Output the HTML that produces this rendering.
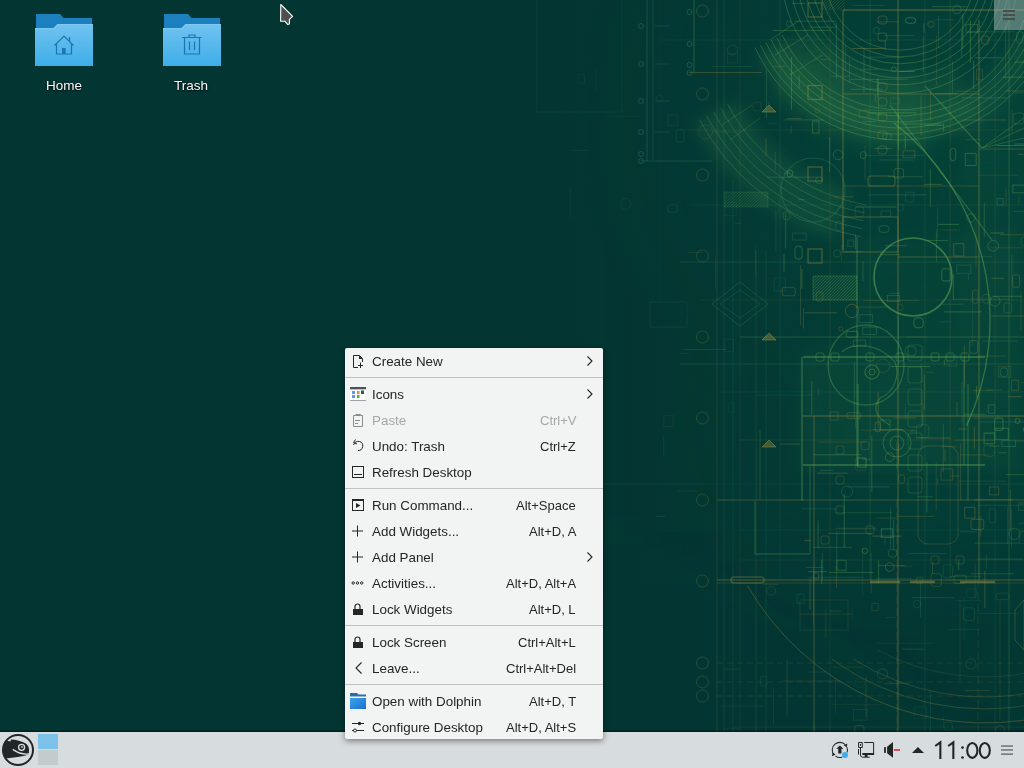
<!DOCTYPE html>
<html><head><meta charset="utf-8">
<style>
*{margin:0;padding:0;box-sizing:border-box}
html,body{width:1024px;height:768px;overflow:hidden;background:#033633;font-family:"Liberation Sans",sans-serif}
svg{display:block}
.abs{position:absolute}
#bg{position:absolute;left:0;top:0;width:1024px;height:768px}
.lbl{will-change:transform;position:absolute;top:78px;width:80px;text-align:center;color:#fcfcfc;font-size:13.5px;text-shadow:0 1px 2px rgba(0,0,0,.9),0 0 1px rgba(0,0,0,.6)}
#menu{position:absolute;z-index:5;left:345px;top:348px;width:258px;height:391px;background:#f2f4f3;border-radius:2px;box-shadow:0 2px 6px rgba(0,0,0,.45)}
.it{position:absolute;left:0;width:258px;height:26px;font-size:13px;color:#232627}
.it .t,.it .s{will-change:transform}
.it .t{position:absolute;left:27px;top:6px;white-space:nowrap;font-size:13.4px}
.it .s{position:absolute;right:27px;top:6px;white-space:nowrap}
.it svg{position:absolute;left:5px;top:5px}
.it .ar{position:absolute;left:241px;top:7px}
.it.dis{color:#a5a7a8}
.sep{position:absolute;left:0;width:258px;height:1px;background:#bfc1c2}
#panel{position:absolute;left:0;top:732px;width:1024px;height:36px;background:#d7dcdf}
</style></head><body>
<svg id="bg" width="1024" height="768" viewBox="0 0 1024 768">
<defs>
<radialGradient id="glow" cx="900" cy="120" r="330" gradientUnits="userSpaceOnUse">
<stop offset="0" stop-color="#2a8a50" stop-opacity="0.10"/>
<stop offset="0.5" stop-color="#1a6e48" stop-opacity="0.06"/>
<stop offset="1" stop-color="#0a4a3a" stop-opacity="0"/>
</radialGradient>
<radialGradient id="glow2" cx="900" cy="420" r="230" gradientUnits="userSpaceOnUse">
<stop offset="0" stop-color="#1f7548" stop-opacity="0.10"/>
<stop offset="1" stop-color="#0a4a3a" stop-opacity="0"/>
</radialGradient>
<linearGradient id="lg" x1="480" y1="0" x2="1024" y2="0" gradientUnits="userSpaceOnUse">
<stop offset="0" stop-color="#0a4a3a" stop-opacity="0"/>
<stop offset="0.45" stop-color="#0a4a3a" stop-opacity="0.05"/>
<stop offset="1" stop-color="#0b4e3c" stop-opacity="0.25"/>
</linearGradient>
<linearGradient id="vg" x1="0" y1="0" x2="0" y2="768" gradientUnits="userSpaceOnUse">
<stop offset="0" stop-color="#000" stop-opacity="1"/>
<stop offset="0.7" stop-color="#000" stop-opacity="1"/>
<stop offset="0.8" stop-color="#000" stop-opacity="0"/>
</linearGradient>
<linearGradient id="vgm" x1="0" y1="0" x2="0" y2="768" gradientUnits="userSpaceOnUse">
<stop offset="0" stop-color="#fff"/><stop offset="0.66" stop-color="#fff"/><stop offset="0.82" stop-color="#fff" stop-opacity="0.2"/><stop offset="1" stop-color="#fff" stop-opacity="0.1"/>
</linearGradient>
<mask id="vm" maskUnits="userSpaceOnUse" x="0" y="0" width="1024" height="768"><rect x="0" y="0" width="1024" height="768" fill="url(#vgm)"/></mask>
<filter id="softbig" x="0" y="0" width="1024" height="768" filterUnits="userSpaceOnUse"><feGaussianBlur stdDeviation="7"/></filter>
<filter id="soft" x="0" y="0" width="1024" height="768" filterUnits="userSpaceOnUse"><feGaussianBlur stdDeviation="0.45"/></filter>
</defs>
<g filter="url(#softbig)"><path d="M1045.0 47.6 A160 160 0 0 1 758.7 55.1 L785.2 41.0 A130 130 0 0 0 1017.8 34.9 Z" fill="#66b85a" fill-opacity="0.13"/>
<path d="M980.0 116.6 A160 160 0 0 1 761.4 58.0 L813.4 28.0 A100 100 0 0 0 950.0 64.6 Z" fill="#66b85a" fill-opacity="0.12"/>
<path d="M930.4 150.3 A175 175 0 0 1 765.9 90.5 L831.1 35.9 A90 90 0 0 0 915.6 66.6 Z" fill="#66b85a" fill-opacity="0.07"/>
<path d="M835.2 238.9 A235 235 0 0 1 692.5 123.3 L736.7 99.9 A185 185 0 0 0 849.0 190.8 Z" fill="#66b85a" fill-opacity="0.13"/>
<rect x="800" y="350" width="224" height="120" fill="#66b85a" fill-opacity="0.07"/>
<rect x="850" y="235" width="174" height="110" fill="#66b85a" fill-opacity="0.04"/>
<rect x="960" y="100" width="64" height="250" fill="#66b85a" fill-opacity="0.04"/></g>
<g filter="url(#soft)"><rect x="480" y="0" width="544" height="732" fill="url(#lg)" mask="url(#vm)"/>
<rect x="0" y="0" width="1024" height="768" fill="url(#glow)"/>
<rect x="0" y="0" width="1024" height="768" fill="url(#glow2)"/>
<rect x="537" y="-1" width="85" height="113" rx="0" fill="none" fill-opacity="0" stroke="#3f9a74" stroke-opacity="0.1" stroke-width="1"/>
<line x1="647" y1="0" x2="647" y2="161" stroke="#3f9a74" stroke-opacity="0.28" stroke-width="1"/>
<line x1="653" y1="0" x2="653" y2="161" stroke="#3f9a74" stroke-opacity="0.2" stroke-width="1"/>
<circle cx="641" cy="26" r="2.5" fill="none" stroke="#3f9a74" stroke-opacity="0.3" stroke-width="1"/>
<circle cx="641" cy="64" r="2.5" fill="none" stroke="#3f9a74" stroke-opacity="0.3" stroke-width="1"/>
<circle cx="641" cy="101" r="2.5" fill="none" stroke="#3f9a74" stroke-opacity="0.3" stroke-width="1"/>
<circle cx="641" cy="132" r="2.5" fill="none" stroke="#3f9a74" stroke-opacity="0.3" stroke-width="1"/>
<circle cx="641" cy="154" r="2.5" fill="none" stroke="#3f9a74" stroke-opacity="0.3" stroke-width="1"/>
<circle cx="641" cy="161" r="2.5" fill="none" stroke="#3f9a74" stroke-opacity="0.3" stroke-width="1"/>
<line x1="641" y1="161" x2="712" y2="161" stroke="#3f9a74" stroke-opacity="0.25" stroke-width="1"/>
<line x1="655" y1="26" x2="670" y2="26" stroke="#3f9a74" stroke-opacity="0.2" stroke-width="1"/>
<line x1="655" y1="64" x2="670" y2="64" stroke="#3f9a74" stroke-opacity="0.2" stroke-width="1"/>
<line x1="655" y1="101" x2="670" y2="101" stroke="#3f9a74" stroke-opacity="0.2" stroke-width="1"/>
<line x1="655" y1="132" x2="670" y2="132" stroke="#3f9a74" stroke-opacity="0.2" stroke-width="1"/>
<line x1="694" y1="0" x2="694" y2="72" stroke="#66b85a" stroke-opacity="0.3" stroke-width="1"/>
<circle cx="689.5" cy="12" r="2.5" fill="none" stroke="#3f9a74" stroke-opacity="0.35" stroke-width="1"/>
<circle cx="689.5" cy="44" r="2.5" fill="none" stroke="#3f9a74" stroke-opacity="0.35" stroke-width="1"/>
<circle cx="689.5" cy="65" r="2.5" fill="none" stroke="#3f9a74" stroke-opacity="0.35" stroke-width="1"/>
<circle cx="689.5" cy="73" r="2.5" fill="none" stroke="#3f9a74" stroke-opacity="0.35" stroke-width="1"/>
<line x1="689" y1="72.5" x2="762" y2="72.5" stroke="#9a8d3e" stroke-opacity="0.3" stroke-width="1"/>
<circle cx="702.5" cy="11" r="6" fill="none" stroke="#9a8d3e" stroke-opacity="0.25" stroke-width="1"/>
<circle cx="702.5" cy="94" r="6" fill="none" stroke="#9a8d3e" stroke-opacity="0.25" stroke-width="1"/>
<circle cx="702.5" cy="175" r="6" fill="none" stroke="#9a8d3e" stroke-opacity="0.25" stroke-width="1"/>
<circle cx="702.5" cy="256" r="6" fill="none" stroke="#9a8d3e" stroke-opacity="0.25" stroke-width="1"/>
<circle cx="702.5" cy="337" r="6" fill="none" stroke="#9a8d3e" stroke-opacity="0.25" stroke-width="1"/>
<circle cx="702.5" cy="418" r="6" fill="none" stroke="#9a8d3e" stroke-opacity="0.25" stroke-width="1"/>
<circle cx="702.5" cy="500" r="6" fill="none" stroke="#9a8d3e" stroke-opacity="0.25" stroke-width="1"/>
<circle cx="702.5" cy="581" r="6" fill="none" stroke="#9a8d3e" stroke-opacity="0.25" stroke-width="1"/>
<circle cx="702.5" cy="663" r="6" fill="none" stroke="#9a8d3e" stroke-opacity="0.25" stroke-width="1"/>
<circle cx="702.5" cy="682" r="6" fill="none" stroke="#9a8d3e" stroke-opacity="0.25" stroke-width="1"/>
<circle cx="702.5" cy="696" r="6" fill="none" stroke="#9a8d3e" stroke-opacity="0.25" stroke-width="1"/>
<line x1="717" y1="0" x2="717" y2="732" stroke="#9a8d3e" stroke-opacity="0.18" stroke-width="1"/>
<line x1="724" y1="0" x2="724" y2="732" stroke="#3f9a74" stroke-opacity="0.16" stroke-width="1"/>
<line x1="733" y1="180" x2="733" y2="732" stroke="#3f9a74" stroke-opacity="0.14" stroke-width="1"/>
<line x1="756" y1="250" x2="756" y2="732" stroke="#9a8d3e" stroke-opacity="0.14" stroke-width="1"/>
<line x1="766" y1="250" x2="766" y2="732" stroke="#3f9a74" stroke-opacity="0.14" stroke-width="1"/>
<path d="M740 282 L768 304 L740 326 L712 304 Z" fill="none" fill-opacity="0" stroke="#3f9a74" stroke-opacity="0.25" stroke-width="1"/>
<path d="M740 290 L760 304 L740 318 L720 304 Z" fill="none" fill-opacity="0" stroke="#3f9a74" stroke-opacity="0.2" stroke-width="1"/>
<rect x="724" y="192" width="44" height="15" rx="0" fill="#66b85a" fill-opacity="0.06" stroke="#66b85a" stroke-opacity="0.15" stroke-width="1"/>
<line x1="680" y1="262" x2="1024" y2="262" stroke="#3f9a74" stroke-opacity="0.18" stroke-width="1"/>
<line x1="680" y1="364" x2="1024" y2="364" stroke="#3f9a74" stroke-opacity="0.2" stroke-width="1"/>
<line x1="740" y1="337" x2="1024" y2="337" stroke="#66b85a" stroke-opacity="0.25" stroke-width="1"/>
<rect x="650" y="302" width="37" height="25" rx="0" fill="none" fill-opacity="0" stroke="#3f9a74" stroke-opacity="0.12" stroke-width="1"/>
<path d="M974.3 -14.6 A75 75 0 0 1 825.7 -14.6" fill="none" fill-opacity="0" stroke="#66b85a" stroke-opacity="0.3" stroke-width="1"/>
<path d="M981.2 -13.6 A82 82 0 0 1 818.8 -13.6" fill="none" fill-opacity="0" stroke="#66b85a" stroke-opacity="0.3" stroke-width="1"/>
<path d="M988.1 -12.6 A89 89 0 0 1 811.9 -12.6" fill="none" fill-opacity="0" stroke="#66b85a" stroke-opacity="0.3" stroke-width="1"/>
<path d="M995.1 -11.6 A96 96 0 0 1 804.9 -11.6" fill="none" fill-opacity="0" stroke="#66b85a" stroke-opacity="0.3" stroke-width="1"/>
<path d="M1002.0 -10.7 A103 103 0 0 1 798.0 -10.7" fill="none" fill-opacity="0" stroke="#66b85a" stroke-opacity="0.3" stroke-width="1"/>
<path d="M1008.9 -9.7 A110 110 0 0 1 791.1 -9.7" fill="none" fill-opacity="0" stroke="#66b85a" stroke-opacity="0.3" stroke-width="1"/>
<path d="M1016.9 -8.6 A118 118 0 0 1 783.1 -8.6" fill="none" fill-opacity="0" stroke="#66b85a" stroke-opacity="0.3" stroke-width="1"/>
<path d="M1023.6 20.2 A130 130 0 0 1 782.2 34.9" fill="none" fill-opacity="0" stroke="#66b85a" stroke-opacity="0.3" stroke-width="1"/>
<path d="M1029.3 22.0 A136 136 0 0 1 776.7 37.5" fill="none" fill-opacity="0" stroke="#66b85a" stroke-opacity="0.3" stroke-width="1"/>
<path d="M1035.1 23.9 A142 142 0 0 1 771.3 40.0" fill="none" fill-opacity="0" stroke="#66b85a" stroke-opacity="0.3" stroke-width="1"/>
<path d="M1040.8 25.7 A148 148 0 0 1 765.9 42.5" fill="none" fill-opacity="0" stroke="#66b85a" stroke-opacity="0.3" stroke-width="1"/>
<path d="M1046.5 27.6 A154 154 0 0 1 760.4 45.1" fill="none" fill-opacity="0" stroke="#66b85a" stroke-opacity="0.3" stroke-width="1"/>
<path d="M1052.2 29.4 A160 160 0 0 1 755.0 47.6" fill="none" fill-opacity="0" stroke="#66b85a" stroke-opacity="0.3" stroke-width="1"/>
<path d="M866.1 205.0 A195 195 0 0 1 727.8 104.5" fill="none" fill-opacity="0" stroke="#66b85a" stroke-opacity="0.24" stroke-width="1"/>
<path d="M864.7 212.9 A203 203 0 0 1 720.8 108.3" fill="none" fill-opacity="0" stroke="#66b85a" stroke-opacity="0.24" stroke-width="1"/>
<path d="M863.4 220.8 A211 211 0 0 1 713.7 112.1" fill="none" fill-opacity="0" stroke="#66b85a" stroke-opacity="0.24" stroke-width="1"/>
<path d="M862.0 228.7 A219 219 0 0 1 706.6 115.8" fill="none" fill-opacity="0" stroke="#66b85a" stroke-opacity="0.24" stroke-width="1"/>
<path d="M860.6 236.6 A227 227 0 0 1 699.6 119.6" fill="none" fill-opacity="0" stroke="#66b85a" stroke-opacity="0.24" stroke-width="1"/>
<circle cx="813" cy="190" r="32" fill="none" stroke="#3f9a74" stroke-opacity="0.25" stroke-width="1.2"/>
<ellipse cx="866" cy="365" rx="38" ry="40" fill="none" stroke="#66b85a" stroke-opacity="0.3" stroke-width="1.3"/>
<circle cx="872" cy="372" r="7" fill="none" stroke="#66b85a" stroke-opacity="0.35" stroke-width="1.2"/>
<circle cx="872" cy="372" r="3" fill="none" stroke="#66b85a" stroke-opacity="0.35" stroke-width="1"/>
<path d="M842 352 C855 340 880 345 895 362 C900 375 895 392 880 398 C870 410 880 420 890 425" fill="none" fill-opacity="0" stroke="#66b85a" stroke-opacity="0.3" stroke-width="1.2"/>
<rect x="908" y="345" width="14" height="16" rx="3" fill="none" fill-opacity="0" stroke="#66b85a" stroke-opacity="0.2" stroke-width="1.1"/>
<rect x="908" y="367" width="14" height="16" rx="3" fill="none" fill-opacity="0" stroke="#66b85a" stroke-opacity="0.2" stroke-width="1.1"/>
<rect x="908" y="389" width="14" height="16" rx="3" fill="none" fill-opacity="0" stroke="#66b85a" stroke-opacity="0.2" stroke-width="1.1"/>
<rect x="908" y="411" width="14" height="16" rx="3" fill="none" fill-opacity="0" stroke="#66b85a" stroke-opacity="0.2" stroke-width="1.1"/>
<rect x="908" y="433" width="14" height="16" rx="3" fill="none" fill-opacity="0" stroke="#66b85a" stroke-opacity="0.2" stroke-width="1.1"/>
<rect x="908" y="455" width="14" height="16" rx="3" fill="none" fill-opacity="0" stroke="#66b85a" stroke-opacity="0.2" stroke-width="1.1"/>
<rect x="908" y="477" width="14" height="16" rx="3" fill="none" fill-opacity="0" stroke="#66b85a" stroke-opacity="0.2" stroke-width="1.1"/>
<path d="M770 40 L800 20 M775 55 L808 35 M790 75 L822 55" fill="none" fill-opacity="0" stroke="#66b85a" stroke-opacity="0.25" stroke-width="1"/>
<path d="M722 125 L752 105 M730 140 L760 118" fill="none" fill-opacity="0" stroke="#66b85a" stroke-opacity="0.22" stroke-width="1"/>
<path d="M893.9 123.0 A250 250 0 0 1 966.6 425.7" fill="none" fill-opacity="0" stroke="#66b85a" stroke-opacity="0.42" stroke-width="1.3"/>
<line x1="925" y1="86" x2="982" y2="148" stroke="#66b85a" stroke-opacity="0.32" stroke-width="1.2"/>
<line x1="890" y1="105" x2="992" y2="240" stroke="#66b85a" stroke-opacity="0.35" stroke-width="1.2"/>
<line x1="982" y1="148" x2="1024" y2="118" stroke="#66b85a" stroke-opacity="0.3" stroke-width="1"/>
<line x1="982" y1="148" x2="1024" y2="128" stroke="#66b85a" stroke-opacity="0.25" stroke-width="1"/>
<line x1="982" y1="148" x2="1024" y2="138" stroke="#66b85a" stroke-opacity="0.25" stroke-width="1"/>
<line x1="843" y1="10" x2="843" y2="250" stroke="#9a8d3e" stroke-opacity="0.4" stroke-width="1.3"/>
<line x1="898" y1="0" x2="898" y2="732" stroke="#9a8d3e" stroke-opacity="0.36" stroke-width="1.4"/>
<line x1="979" y1="20" x2="979" y2="580" stroke="#9a8d3e" stroke-opacity="0.36" stroke-width="1.3"/>
<line x1="843" y1="10" x2="1024" y2="10" stroke="#9a8d3e" stroke-opacity="0.4" stroke-width="1.3"/>
<line x1="843" y1="94" x2="979" y2="94" stroke="#9a8d3e" stroke-opacity="0.36" stroke-width="1.2"/>
<line x1="979" y1="149" x2="1024" y2="149" stroke="#9a8d3e" stroke-opacity="0.3" stroke-width="1"/>
<rect x="808" y="3" width="14" height="14" rx="0" fill="none" fill-opacity="0" stroke="#9a8d3e" stroke-opacity="0.42" stroke-width="1.3"/>
<rect x="808" y="85.5" width="14" height="14" rx="0" fill="none" fill-opacity="0" stroke="#9a8d3e" stroke-opacity="0.42" stroke-width="1.3"/>
<rect x="808" y="167" width="14" height="14" rx="0" fill="none" fill-opacity="0" stroke="#9a8d3e" stroke-opacity="0.42" stroke-width="1.3"/>
<rect x="808" y="249" width="14" height="14" rx="0" fill="none" fill-opacity="0" stroke="#9a8d3e" stroke-opacity="0.42" stroke-width="1.3"/>
<rect x="878" y="16" width="9" height="8" rx="3" fill="none" fill-opacity="0" stroke="#9a8d3e" stroke-opacity="0.3" stroke-width="1"/>
<rect x="878" y="33" width="9" height="8" rx="3" fill="none" fill-opacity="0" stroke="#9a8d3e" stroke-opacity="0.3" stroke-width="1"/>
<rect x="878" y="83" width="9" height="8" rx="3" fill="none" fill-opacity="0" stroke="#9a8d3e" stroke-opacity="0.3" stroke-width="1"/>
<rect x="878" y="98" width="9" height="8" rx="3" fill="none" fill-opacity="0" stroke="#9a8d3e" stroke-opacity="0.3" stroke-width="1"/>
<rect x="878" y="113" width="9" height="8" rx="3" fill="none" fill-opacity="0" stroke="#9a8d3e" stroke-opacity="0.3" stroke-width="1"/>
<rect x="878" y="131" width="9" height="8" rx="3" fill="none" fill-opacity="0" stroke="#9a8d3e" stroke-opacity="0.3" stroke-width="1"/>
<rect x="878" y="146" width="9" height="8" rx="3" fill="none" fill-opacity="0" stroke="#9a8d3e" stroke-opacity="0.3" stroke-width="1"/>
<rect x="868" y="176" width="27" height="10" rx="3" fill="none" fill-opacity="0" stroke="#9a8d3e" stroke-opacity="0.35" stroke-width="1.2"/>
<line x1="843" y1="186" x2="979" y2="186" stroke="#9a8d3e" stroke-opacity="0.25" stroke-width="1"/>
<circle cx="913" cy="277" r="39" fill="none" stroke="#66b85a" stroke-opacity="0.5" stroke-width="1.6"/>
<rect x="843" y="217" width="55" height="35" rx="0" fill="none" fill-opacity="0" stroke="#9a8d3e" stroke-opacity="0.35" stroke-width="1.2"/>
<line x1="898" y1="257" x2="978" y2="257" stroke="#9a8d3e" stroke-opacity="0.38" stroke-width="1.2"/>
<rect x="813" y="276" width="44" height="24" rx="0" fill="#66b85a" fill-opacity="0.08" stroke="#66b85a" stroke-opacity="0.25" stroke-width="1"/>
<line x1="1009" y1="0" x2="1009" y2="732" stroke="#66b85a" stroke-opacity="0.22" stroke-width="1"/>
<line x1="857" y1="237" x2="857" y2="466" stroke="#66b85a" stroke-opacity="0.35" stroke-width="1.2"/>
<line x1="803" y1="357" x2="985" y2="357" stroke="#66b85a" stroke-opacity="0.45" stroke-width="1.6"/>
<rect x="816" y="353" width="8" height="8" rx="2" fill="none" fill-opacity="0" stroke="#66b85a" stroke-opacity="0.3" stroke-width="1"/>
<rect x="831" y="353" width="8" height="8" rx="2" fill="none" fill-opacity="0" stroke="#66b85a" stroke-opacity="0.3" stroke-width="1"/>
<rect x="866" y="353" width="8" height="8" rx="2" fill="none" fill-opacity="0" stroke="#66b85a" stroke-opacity="0.3" stroke-width="1"/>
<rect x="896" y="353" width="8" height="8" rx="2" fill="none" fill-opacity="0" stroke="#66b85a" stroke-opacity="0.3" stroke-width="1"/>
<rect x="931" y="353" width="8" height="8" rx="2" fill="none" fill-opacity="0" stroke="#66b85a" stroke-opacity="0.3" stroke-width="1"/>
<rect x="946" y="353" width="8" height="8" rx="2" fill="none" fill-opacity="0" stroke="#66b85a" stroke-opacity="0.3" stroke-width="1"/>
<rect x="961" y="353" width="8" height="8" rx="2" fill="none" fill-opacity="0" stroke="#66b85a" stroke-opacity="0.3" stroke-width="1"/>
<rect x="830" y="412" width="8" height="8" rx="0" fill="none" fill-opacity="0" stroke="#9a8d3e" stroke-opacity="0.25" stroke-width="1"/>
<rect x="880" y="420" width="10" height="10" rx="0" fill="none" fill-opacity="0" stroke="#66b85a" stroke-opacity="0.25" stroke-width="1"/>
<line x1="803" y1="416" x2="1024" y2="416" stroke="#9a8d3e" stroke-opacity="0.36" stroke-width="1.3"/>
<line x1="803" y1="465" x2="985" y2="465" stroke="#66b85a" stroke-opacity="0.45" stroke-width="1.6"/>
<line x1="802" y1="357" x2="802" y2="501" stroke="#66b85a" stroke-opacity="0.4" stroke-width="1.3"/>
<line x1="964" y1="357" x2="964" y2="465" stroke="#66b85a" stroke-opacity="0.35" stroke-width="1"/>
<line x1="858" y1="384" x2="858" y2="466" stroke="#66b85a" stroke-opacity="0.4" stroke-width="1"/>
<line x1="814" y1="416" x2="814" y2="732" stroke="#9a8d3e" stroke-opacity="0.3" stroke-width="1.3"/>
<line x1="968" y1="384" x2="968" y2="501" stroke="#66b85a" stroke-opacity="0.35" stroke-width="1"/>
<line x1="600" y1="484" x2="1024" y2="484" stroke="#3f9a74" stroke-opacity="0.12" stroke-width="1"/>
<line x1="717" y1="500" x2="1024" y2="500" stroke="#9a8d3e" stroke-opacity="0.35" stroke-width="1.2"/>
<line x1="755" y1="501" x2="755" y2="554" stroke="#66b85a" stroke-opacity="0.3" stroke-width="1"/>
<line x1="755" y1="554" x2="810" y2="554" stroke="#66b85a" stroke-opacity="0.35" stroke-width="1.2"/>
<line x1="810" y1="466" x2="810" y2="554" stroke="#66b85a" stroke-opacity="0.3" stroke-width="1"/>
<circle cx="897" cy="443" r="14" fill="none" stroke="#66b85a" stroke-opacity="0.35" stroke-width="1"/>
<circle cx="897" cy="443" r="7" fill="none" stroke="#66b85a" stroke-opacity="0.35" stroke-width="1"/>
<rect x="918" y="446" width="40" height="98" rx="10" fill="none" fill-opacity="0" stroke="#9a8d3e" stroke-opacity="0.25" stroke-width="1"/>
<rect x="836" y="446" width="8" height="8" rx="2" fill="none" fill-opacity="0" stroke="#9a8d3e" stroke-opacity="0.25" stroke-width="1"/>
<rect x="836" y="476" width="8" height="8" rx="2" fill="none" fill-opacity="0" stroke="#9a8d3e" stroke-opacity="0.25" stroke-width="1"/>
<rect x="836" y="506" width="8" height="8" rx="2" fill="none" fill-opacity="0" stroke="#9a8d3e" stroke-opacity="0.25" stroke-width="1"/>
<rect x="866" y="526" width="8" height="8" rx="2" fill="none" fill-opacity="0" stroke="#9a8d3e" stroke-opacity="0.25" stroke-width="1"/>
<rect x="821" y="536" width="8" height="8" rx="2" fill="none" fill-opacity="0" stroke="#9a8d3e" stroke-opacity="0.25" stroke-width="1"/>
<rect x="931" y="556" width="8" height="8" rx="2" fill="none" fill-opacity="0" stroke="#9a8d3e" stroke-opacity="0.25" stroke-width="1"/>
<rect x="956" y="556" width="8" height="8" rx="2" fill="none" fill-opacity="0" stroke="#9a8d3e" stroke-opacity="0.25" stroke-width="1"/>
<line x1="717" y1="580" x2="1024" y2="580" stroke="#9a8d3e" stroke-opacity="0.3" stroke-width="1.3"/>
<line x1="717" y1="583" x2="1024" y2="583" stroke="#9a8d3e" stroke-opacity="0.22" stroke-width="1"/>
<rect x="731" y="577" width="33" height="6" rx="3" fill="none" fill-opacity="0" stroke="#9a8d3e" stroke-opacity="0.35" stroke-width="1.5"/>
<line x1="870" y1="582" x2="900" y2="582" stroke="#9a8d3e" stroke-opacity="0.5" stroke-width="2.5"/>
<line x1="910" y1="582" x2="935" y2="582" stroke="#9a8d3e" stroke-opacity="0.5" stroke-width="2.5"/>
<line x1="960" y1="582" x2="995" y2="582" stroke="#9a8d3e" stroke-opacity="0.5" stroke-width="2.5"/>
<line x1="717" y1="663" x2="1024" y2="663" stroke="#9a8d3e" stroke-opacity="0.15" stroke-width="1" stroke-dasharray="6 4"/>
<line x1="717" y1="682" x2="1024" y2="682" stroke="#9a8d3e" stroke-opacity="0.15" stroke-width="1" stroke-dasharray="6 4"/>
<line x1="717" y1="696" x2="1024" y2="696" stroke="#9a8d3e" stroke-opacity="0.15" stroke-width="1" stroke-dasharray="6 4"/>
<line x1="734" y1="727" x2="1024" y2="727" stroke="#9a8d3e" stroke-opacity="0.12" stroke-width="1"/>
<line x1="897" y1="500" x2="897" y2="732" stroke="#9a8d3e" stroke-opacity="0.18" stroke-width="1" stroke-dasharray="8 4"/>
<line x1="978" y1="580" x2="978" y2="732" stroke="#9a8d3e" stroke-opacity="0.15" stroke-width="1" stroke-dasharray="8 4"/>
<path d="M1042.0 717.0 A274 274 0 0 1 747.7 586.0" fill="none" fill-opacity="0" stroke="#9a8d3e" stroke-opacity="0.35" stroke-width="1"/>
<path d="M1039.1 703.3 A260 260 0 0 1 832.2 659.3" fill="none" fill-opacity="0" stroke="#9a8d3e" stroke-opacity="0.28" stroke-width="1"/>
<path d="M1036.6 691.6 A248 248 0 0 1 853.6 659.3" fill="none" fill-opacity="0" stroke="#9a8d3e" stroke-opacity="0.25" stroke-width="1"/>
<path d="M1032.4 672.0 A228 228 0 0 1 878.0 650.3" fill="none" fill-opacity="0" stroke="#9a8d3e" stroke-opacity="0.15" stroke-width="1"/>
<path d="M1015 610 L1024 600 L1024 650 L1015 640 Z" fill="none" fill-opacity="0" stroke="#9a8d3e" stroke-opacity="0.3" stroke-width="1"/>
<rect x="800" y="600" width="48" height="30" rx="0" fill="none" fill-opacity="0" stroke="#9a8d3e" stroke-opacity="0.15" stroke-width="1"/>
<line x1="760" y1="430" x2="760" y2="500" stroke="#66b85a" stroke-opacity="0.2" stroke-width="1"/>
<line x1="780" y1="444" x2="800" y2="444" stroke="#9a8d3e" stroke-opacity="0.3" stroke-width="1"/>
<path d="M762 447 L769 440 L776 447 Z" fill="#9a8d3e" fill-opacity="0.4" stroke="#9a8d3e" stroke-opacity="0.5" stroke-width="1"/>
<path d="M634 58 L641 52 L648 58 Z" fill="#9a8d3e" fill-opacity="0.0" stroke="#9a8d3e" stroke-opacity="0.0" stroke-width="1"/>
<path d="M762 112 L769 105 L776 112 Z" fill="#9a8d3e" fill-opacity="0.4" stroke="#9a8d3e" stroke-opacity="0.5" stroke-width="1"/>
<path d="M762 340 L769 333 L776 340 Z" fill="#9a8d3e" fill-opacity="0.4" stroke="#9a8d3e" stroke-opacity="0.5" stroke-width="1"/>
<line x1="960" y1="600" x2="960" y2="680" stroke="#9a8d3e" stroke-opacity="0.15" stroke-width="1"/>
<line x1="1000" y1="600" x2="1000" y2="720" stroke="#9a8d3e" stroke-opacity="0.15" stroke-width="1"/>
<line x1="845.5" y1="45.3" x2="845.5" y2="71.0" stroke="#66b85a" stroke-opacity="0.16" stroke-width="1"/>
<line x1="775.3" y1="152.2" x2="775.3" y2="171.2" stroke="#66b85a" stroke-opacity="0.17" stroke-width="1"/>
<rect x="905.5" y="17.7" width="10.2" height="5.6" rx="3" fill="none" fill-opacity="0" stroke="#66b85a" stroke-opacity="0.34" stroke-width="1"/>
<line x1="773.1" y1="66.3" x2="785.5" y2="66.3" stroke="#9a8d3e" stroke-opacity="0.21" stroke-width="1"/>
<line x1="841.4" y1="244.8" x2="841.4" y2="261.0" stroke="#9a8d3e" stroke-opacity="0.17" stroke-width="1"/>
<line x1="785.7" y1="213.6" x2="785.7" y2="248.3" stroke="#66b85a" stroke-opacity="0.27" stroke-width="1"/>
<line x1="965.2" y1="139.7" x2="980.9" y2="139.7" stroke="#3f9a74" stroke-opacity="0.22" stroke-width="1"/>
<rect x="965.9" y="24.6" width="11.6" height="7.6" rx="0" fill="none" fill-opacity="0" stroke="#66b85a" stroke-opacity="0.26" stroke-width="1"/>
<line x1="791.2" y1="125.4" x2="791.2" y2="133.6" stroke="#66b85a" stroke-opacity="0.18" stroke-width="1"/>
<line x1="936.4" y1="229.4" x2="936.4" y2="262.2" stroke="#66b85a" stroke-opacity="0.22" stroke-width="1"/>
<line x1="970.4" y1="20.6" x2="970.4" y2="62.5" stroke="#66b85a" stroke-opacity="0.34" stroke-width="1"/>
<line x1="776.0" y1="210.4" x2="776.0" y2="252.6" stroke="#3f9a74" stroke-opacity="0.21" stroke-width="1"/>
<line x1="766.0" y1="138.5" x2="766.0" y2="156.3" stroke="#9a8d3e" stroke-opacity="0.27" stroke-width="1"/>
<rect x="835.9" y="221.5" width="5.7" height="9.0" rx="2" fill="none" fill-opacity="0" stroke="#3f9a74" stroke-opacity="0.23" stroke-width="1"/>
<circle cx="993.2" cy="245.8" r="5.4" fill="none" stroke="#66b85a" stroke-opacity="0.29" stroke-width="1"/>
<line x1="860.4" y1="69.2" x2="879.0" y2="69.2" stroke="#66b85a" stroke-opacity="0.19" stroke-width="1"/>
<line x1="888.0" y1="176.7" x2="922.9" y2="176.7" stroke="#66b85a" stroke-opacity="0.21" stroke-width="1"/>
<line x1="921.0" y1="95.6" x2="921.0" y2="134.9" stroke="#9a8d3e" stroke-opacity="0.29" stroke-width="1"/>
<line x1="938.5" y1="16.2" x2="938.5" y2="48.2" stroke="#3f9a74" stroke-opacity="0.23" stroke-width="1"/>
<line x1="865.7" y1="57.2" x2="904.2" y2="57.2" stroke="#9a8d3e" stroke-opacity="0.24" stroke-width="1"/>
<rect x="787.0" y="170.0" width="5.6" height="6.9" rx="3" fill="none" fill-opacity="0" stroke="#66b85a" stroke-opacity="0.34" stroke-width="1"/>
<line x1="799.2" y1="75.7" x2="799.2" y2="87.9" stroke="#66b85a" stroke-opacity="0.27" stroke-width="1"/>
<line x1="888.8" y1="293.3" x2="900.4" y2="293.3" stroke="#3f9a74" stroke-opacity="0.25" stroke-width="1"/>
<line x1="850.5" y1="79.4" x2="907.9" y2="79.4" stroke="#9a8d3e" stroke-opacity="0.25" stroke-width="1"/>
<line x1="855.5" y1="207.0" x2="896.2" y2="207.0" stroke="#66b85a" stroke-opacity="0.3" stroke-width="1"/>
<line x1="784.0" y1="253.6" x2="784.0" y2="271.7" stroke="#66b85a" stroke-opacity="0.33" stroke-width="1"/>
<rect x="903.0" y="150.8" width="11.8" height="6.8" rx="0" fill="none" fill-opacity="0" stroke="#9a8d3e" stroke-opacity="0.27" stroke-width="1"/>
<line x1="976.0" y1="222.0" x2="976.0" y2="267.4" stroke="#9a8d3e" stroke-opacity="0.19" stroke-width="1"/>
<rect x="1021.3" y="237.0" width="13.6" height="9.0" rx="2" fill="none" fill-opacity="0" stroke="#3f9a74" stroke-opacity="0.2" stroke-width="1"/>
<line x1="1012.1" y1="109.4" x2="1012.1" y2="133.6" stroke="#9a8d3e" stroke-opacity="0.17" stroke-width="1"/>
<rect x="887.4" y="295.6" width="12.2" height="5.8" rx="0" fill="none" fill-opacity="0" stroke="#66b85a" stroke-opacity="0.25" stroke-width="1"/>
<line x1="1000.2" y1="234.7" x2="1048.8" y2="234.7" stroke="#9a8d3e" stroke-opacity="0.25" stroke-width="1"/>
<rect x="847.8" y="240.2" width="5.8" height="6.4" rx="0" fill="none" fill-opacity="0" stroke="#3f9a74" stroke-opacity="0.24" stroke-width="1"/>
<line x1="767.3" y1="177.2" x2="817.9" y2="177.2" stroke="#3f9a74" stroke-opacity="0.31" stroke-width="1"/>
<line x1="1018.8" y1="197.2" x2="1018.8" y2="204.3" stroke="#66b85a" stroke-opacity="0.18" stroke-width="1"/>
<circle cx="971.0" cy="217.9" r="4.2" fill="none" stroke="#66b85a" stroke-opacity="0.26" stroke-width="1"/>
<line x1="990.1" y1="247.8" x2="1023.2" y2="247.8" stroke="#9a8d3e" stroke-opacity="0.16" stroke-width="1"/>
<line x1="961.6" y1="97.8" x2="1007.6" y2="97.8" stroke="#3f9a74" stroke-opacity="0.32" stroke-width="1"/>
<rect x="997.0" y="198.7" width="6.2" height="6.4" rx="0" fill="none" fill-opacity="0" stroke="#3f9a74" stroke-opacity="0.32" stroke-width="1"/>
<line x1="990.4" y1="233.0" x2="1004.1" y2="233.0" stroke="#66b85a" stroke-opacity="0.31" stroke-width="1"/>
<line x1="923.4" y1="36.1" x2="923.4" y2="72.1" stroke="#66b85a" stroke-opacity="0.22" stroke-width="1"/>
<line x1="967.0" y1="31.8" x2="1014.8" y2="31.8" stroke="#66b85a" stroke-opacity="0.2" stroke-width="1"/>
<rect x="894.0" y="168.5" width="9.5" height="9.6" rx="2" fill="none" fill-opacity="0" stroke="#66b85a" stroke-opacity="0.24" stroke-width="1"/>
<line x1="879.4" y1="160.0" x2="913.7" y2="160.0" stroke="#3f9a74" stroke-opacity="0.25" stroke-width="1"/>
<line x1="991.3" y1="278.3" x2="1003.8" y2="278.3" stroke="#9a8d3e" stroke-opacity="0.32" stroke-width="1"/>
<line x1="876.7" y1="21.8" x2="899.1" y2="21.8" stroke="#9a8d3e" stroke-opacity="0.24" stroke-width="1"/>
<rect x="792.3" y="233.1" width="13.7" height="7.0" rx="0" fill="none" fill-opacity="0" stroke="#66b85a" stroke-opacity="0.18" stroke-width="1"/>
<line x1="865.1" y1="146.2" x2="865.1" y2="180.0" stroke="#9a8d3e" stroke-opacity="0.18" stroke-width="1"/>
<line x1="849.5" y1="58.7" x2="849.5" y2="83.0" stroke="#66b85a" stroke-opacity="0.17" stroke-width="1"/>
<rect x="881.1" y="210.9" width="9.6" height="5.6" rx="0" fill="none" fill-opacity="0" stroke="#3f9a74" stroke-opacity="0.22" stroke-width="1"/>
<rect x="1016.5" y="31.4" width="6.6" height="11.8" rx="3" fill="none" fill-opacity="0" stroke="#66b85a" stroke-opacity="0.2" stroke-width="1"/>
<line x1="984.3" y1="202.8" x2="984.3" y2="236.6" stroke="#66b85a" stroke-opacity="0.23" stroke-width="1"/>
<rect x="890.6" y="98.1" width="8.8" height="5.7" rx="0" fill="none" fill-opacity="0" stroke="#66b85a" stroke-opacity="0.16" stroke-width="1"/>
<line x1="927.5" y1="240.5" x2="947.8" y2="240.5" stroke="#66b85a" stroke-opacity="0.27" stroke-width="1"/>
<line x1="792.1" y1="3.5" x2="805.1" y2="3.5" stroke="#3f9a74" stroke-opacity="0.34" stroke-width="1"/>
<line x1="899.1" y1="71.5" x2="914.9" y2="71.5" stroke="#66b85a" stroke-opacity="0.34" stroke-width="1"/>
<line x1="1006.1" y1="188.6" x2="1006.1" y2="204.2" stroke="#9a8d3e" stroke-opacity="0.21" stroke-width="1"/>
<line x1="851.6" y1="5.4" x2="884.9" y2="5.4" stroke="#66b85a" stroke-opacity="0.16" stroke-width="1"/>
<line x1="1018.2" y1="154.3" x2="1068.4" y2="154.3" stroke="#9a8d3e" stroke-opacity="0.34" stroke-width="1"/>
<line x1="874.1" y1="148.5" x2="891.7" y2="148.5" stroke="#3f9a74" stroke-opacity="0.34" stroke-width="1"/>
<line x1="820.6" y1="59.6" x2="829.5" y2="59.6" stroke="#9a8d3e" stroke-opacity="0.23" stroke-width="1"/>
<line x1="794.3" y1="21.2" x2="836.2" y2="21.2" stroke="#66b85a" stroke-opacity="0.24" stroke-width="1"/>
<rect x="860.6" y="151.8" width="5.4" height="6.7" rx="2" fill="none" fill-opacity="0" stroke="#66b85a" stroke-opacity="0.27" stroke-width="1"/>
<line x1="877.7" y1="79.0" x2="877.7" y2="98.2" stroke="#66b85a" stroke-opacity="0.34" stroke-width="1"/>
<line x1="1014.9" y1="92.9" x2="1025.5" y2="92.9" stroke="#66b85a" stroke-opacity="0.19" stroke-width="1"/>
<line x1="833.6" y1="196.8" x2="853.9" y2="196.8" stroke="#9a8d3e" stroke-opacity="0.25" stroke-width="1"/>
<line x1="783.7" y1="119.9" x2="823.7" y2="119.9" stroke="#66b85a" stroke-opacity="0.23" stroke-width="1"/>
<rect x="782.3" y="287.3" width="12.9" height="8.5" rx="2" fill="none" fill-opacity="0" stroke="#9a8d3e" stroke-opacity="0.28" stroke-width="1"/>
<rect x="950.3" y="148.3" width="5.4" height="12.5" rx="3" fill="none" fill-opacity="0" stroke="#66b85a" stroke-opacity="0.29" stroke-width="1"/>
<rect x="953.7" y="243.7" width="10.1" height="12.3" rx="0" fill="none" fill-opacity="0" stroke="#9a8d3e" stroke-opacity="0.33" stroke-width="1"/>
<line x1="978.2" y1="175.2" x2="1018.6" y2="175.2" stroke="#9a8d3e" stroke-opacity="0.17" stroke-width="1"/>
<rect x="1013.3" y="113.0" width="10.6" height="11.1" rx="3" fill="none" fill-opacity="0" stroke="#3f9a74" stroke-opacity="0.26" stroke-width="1"/>
<line x1="829.6" y1="137.1" x2="829.6" y2="172.0" stroke="#66b85a" stroke-opacity="0.3" stroke-width="1"/>
<line x1="934.1" y1="19.8" x2="954.4" y2="19.8" stroke="#3f9a74" stroke-opacity="0.2" stroke-width="1"/>
<line x1="952.5" y1="61.6" x2="952.5" y2="93.4" stroke="#3f9a74" stroke-opacity="0.25" stroke-width="1"/>
<line x1="940.5" y1="230.1" x2="960.2" y2="230.1" stroke="#9a8d3e" stroke-opacity="0.17" stroke-width="1"/>
<line x1="956.2" y1="91.3" x2="976.7" y2="91.3" stroke="#9a8d3e" stroke-opacity="0.15" stroke-width="1"/>
<line x1="937.4" y1="207.7" x2="937.4" y2="238.7" stroke="#3f9a74" stroke-opacity="0.21" stroke-width="1"/>
<line x1="883.1" y1="35.6" x2="914.7" y2="35.6" stroke="#9a8d3e" stroke-opacity="0.21" stroke-width="1"/>
<line x1="836.5" y1="22.9" x2="836.5" y2="78.4" stroke="#3f9a74" stroke-opacity="0.35" stroke-width="1"/>
<line x1="1005.7" y1="22.4" x2="1005.7" y2="79.8" stroke="#66b85a" stroke-opacity="0.18" stroke-width="1"/>
<rect x="795.0" y="246.1" width="7.1" height="13.1" rx="3" fill="none" fill-opacity="0" stroke="#66b85a" stroke-opacity="0.33" stroke-width="1"/>
<line x1="864.0" y1="47.7" x2="864.0" y2="93.0" stroke="#3f9a74" stroke-opacity="0.29" stroke-width="1"/>
<line x1="869.9" y1="112.8" x2="916.4" y2="112.8" stroke="#66b85a" stroke-opacity="0.32" stroke-width="1"/>
<rect x="981.5" y="36.0" width="7.6" height="8.3" rx="3" fill="none" fill-opacity="0" stroke="#9a8d3e" stroke-opacity="0.29" stroke-width="1"/>
<line x1="863.0" y1="261.0" x2="863.0" y2="281.8" stroke="#66b85a" stroke-opacity="0.22" stroke-width="1"/>
<line x1="772.7" y1="30.5" x2="831.2" y2="30.5" stroke="#66b85a" stroke-opacity="0.28" stroke-width="1"/>
<line x1="875.2" y1="94.7" x2="875.2" y2="102.2" stroke="#66b85a" stroke-opacity="0.31" stroke-width="1"/>
<line x1="961.1" y1="120.0" x2="1006.6" y2="120.0" stroke="#9a8d3e" stroke-opacity="0.29" stroke-width="1"/>
<rect x="879.0" y="225.8" width="10.0" height="6.5" rx="3" fill="none" fill-opacity="0" stroke="#66b85a" stroke-opacity="0.25" stroke-width="1"/>
<line x1="850.7" y1="89.3" x2="882.8" y2="89.3" stroke="#66b85a" stroke-opacity="0.23" stroke-width="1"/>
<line x1="936.6" y1="35.9" x2="936.6" y2="85.8" stroke="#9a8d3e" stroke-opacity="0.17" stroke-width="1"/>
<line x1="905.3" y1="135.9" x2="905.3" y2="149.4" stroke="#66b85a" stroke-opacity="0.35" stroke-width="1"/>
<line x1="810.8" y1="27.2" x2="836.7" y2="27.2" stroke="#66b85a" stroke-opacity="0.26" stroke-width="1"/>
<line x1="973.7" y1="60.6" x2="973.7" y2="89.0" stroke="#66b85a" stroke-opacity="0.3" stroke-width="1"/>
<line x1="898.4" y1="113.1" x2="898.4" y2="150.1" stroke="#66b85a" stroke-opacity="0.3" stroke-width="1"/>
<rect x="855.1" y="206.0" width="8.5" height="10.8" rx="3" fill="none" fill-opacity="0" stroke="#9a8d3e" stroke-opacity="0.17" stroke-width="1"/>
<line x1="1011.8" y1="254.6" x2="1011.8" y2="301.8" stroke="#66b85a" stroke-opacity="0.18" stroke-width="1"/>
<line x1="972.3" y1="290.5" x2="972.3" y2="346.5" stroke="#3f9a74" stroke-opacity="0.15" stroke-width="1"/>
<line x1="978.0" y1="256.6" x2="992.3" y2="256.6" stroke="#3f9a74" stroke-opacity="0.2" stroke-width="1"/>
<rect x="897.9" y="204.6" width="5.0" height="6.1" rx="0" fill="none" fill-opacity="0" stroke="#3f9a74" stroke-opacity="0.17" stroke-width="1"/>
<line x1="930.4" y1="91.1" x2="930.4" y2="120.8" stroke="#9a8d3e" stroke-opacity="0.28" stroke-width="1"/>
<line x1="961.7" y1="29.8" x2="961.7" y2="56.8" stroke="#66b85a" stroke-opacity="0.25" stroke-width="1"/>
<circle cx="819.0" cy="180.3" r="3.4" fill="none" stroke="#66b85a" stroke-opacity="0.26" stroke-width="1"/>
<line x1="843.5" y1="251.8" x2="862.9" y2="251.8" stroke="#9a8d3e" stroke-opacity="0.25" stroke-width="1"/>
<line x1="1013.6" y1="211.4" x2="1067.4" y2="211.4" stroke="#66b85a" stroke-opacity="0.16" stroke-width="1"/>
<circle cx="930.9" cy="24.3" r="3.1" fill="none" stroke="#9a8d3e" stroke-opacity="0.28" stroke-width="1"/>
<line x1="769.0" y1="101.4" x2="769.0" y2="107.8" stroke="#3f9a74" stroke-opacity="0.22" stroke-width="1"/>
<circle cx="837.1" cy="253.5" r="3.6" fill="none" stroke="#66b85a" stroke-opacity="0.19" stroke-width="1"/>
<rect x="976.5" y="69.2" width="6.0" height="10.6" rx="0" fill="none" fill-opacity="0" stroke="#9a8d3e" stroke-opacity="0.2" stroke-width="1"/>
<line x1="996.7" y1="145.5" x2="1023.9" y2="145.5" stroke="#66b85a" stroke-opacity="0.34" stroke-width="1"/>
<rect x="816.2" y="292.2" width="6.7" height="9.0" rx="2" fill="none" fill-opacity="0" stroke="#9a8d3e" stroke-opacity="0.23" stroke-width="1"/>
<line x1="953.4" y1="299.3" x2="1010.0" y2="299.3" stroke="#9a8d3e" stroke-opacity="0.22" stroke-width="1"/>
<circle cx="957.0" cy="9.6" r="4.2" fill="none" stroke="#3f9a74" stroke-opacity="0.32" stroke-width="1"/>
<circle cx="788.8" cy="23.5" r="2.6" fill="none" stroke="#66b85a" stroke-opacity="0.22" stroke-width="1"/>
<line x1="1014.6" y1="62.2" x2="1064.0" y2="62.2" stroke="#66b85a" stroke-opacity="0.3" stroke-width="1"/>
<rect x="783.2" y="211.6" width="6.7" height="8.3" rx="3" fill="none" fill-opacity="0" stroke="#9a8d3e" stroke-opacity="0.22" stroke-width="1"/>
<line x1="768.0" y1="123.2" x2="777.4" y2="123.2" stroke="#3f9a74" stroke-opacity="0.16" stroke-width="1"/>
<line x1="1002.9" y1="77.1" x2="1023.6" y2="77.1" stroke="#66b85a" stroke-opacity="0.33" stroke-width="1"/>
<rect x="1012.8" y="185.1" width="13.3" height="7.7" rx="0" fill="none" fill-opacity="0" stroke="#66b85a" stroke-opacity="0.3" stroke-width="1"/>
<line x1="766.4" y1="70.2" x2="766.4" y2="118.1" stroke="#3f9a74" stroke-opacity="0.29" stroke-width="1"/>
<line x1="968.5" y1="274.1" x2="968.5" y2="280.5" stroke="#3f9a74" stroke-opacity="0.18" stroke-width="1"/>
<line x1="1005.8" y1="91.0" x2="1029.1" y2="91.0" stroke="#9a8d3e" stroke-opacity="0.27" stroke-width="1"/>
<line x1="855.5" y1="234.7" x2="855.5" y2="249.3" stroke="#66b85a" stroke-opacity="0.25" stroke-width="1"/>
<line x1="867.6" y1="194.9" x2="926.6" y2="194.9" stroke="#3f9a74" stroke-opacity="0.26" stroke-width="1"/>
<line x1="993.2" y1="296.3" x2="1022.0" y2="296.3" stroke="#66b85a" stroke-opacity="0.27" stroke-width="1"/>
<line x1="1020.9" y1="291.6" x2="1020.9" y2="331.1" stroke="#9a8d3e" stroke-opacity="0.2" stroke-width="1"/>
<line x1="938.0" y1="224.4" x2="959.1" y2="224.4" stroke="#66b85a" stroke-opacity="0.31" stroke-width="1"/>
<line x1="830.7" y1="76.2" x2="849.9" y2="76.2" stroke="#66b85a" stroke-opacity="0.19" stroke-width="1"/>
<line x1="800.5" y1="265.3" x2="800.5" y2="324.8" stroke="#9a8d3e" stroke-opacity="0.22" stroke-width="1"/>
<circle cx="893.9" cy="69.4" r="2.5" fill="none" stroke="#66b85a" stroke-opacity="0.28" stroke-width="1"/>
<line x1="885.3" y1="245.7" x2="907.2" y2="245.7" stroke="#3f9a74" stroke-opacity="0.33" stroke-width="1"/>
<line x1="791.5" y1="56.9" x2="791.5" y2="109.6" stroke="#9a8d3e" stroke-opacity="0.34" stroke-width="1"/>
<line x1="878.6" y1="78.0" x2="878.6" y2="117.5" stroke="#66b85a" stroke-opacity="0.17" stroke-width="1"/>
<circle cx="817.5" cy="110.6" r="2.2" fill="none" stroke="#9a8d3e" stroke-opacity="0.16" stroke-width="1"/>
<line x1="953.3" y1="274.2" x2="953.3" y2="300.3" stroke="#66b85a" stroke-opacity="0.31" stroke-width="1"/>
<line x1="923.9" y1="23.4" x2="923.9" y2="32.8" stroke="#66b85a" stroke-opacity="0.31" stroke-width="1"/>
<line x1="786.8" y1="118.6" x2="801.6" y2="118.6" stroke="#9a8d3e" stroke-opacity="0.28" stroke-width="1"/>
<line x1="943.6" y1="122.9" x2="943.6" y2="131.7" stroke="#66b85a" stroke-opacity="0.28" stroke-width="1"/>
<rect x="956.8" y="265.1" width="14.0" height="8.3" rx="0" fill="none" fill-opacity="0" stroke="#3f9a74" stroke-opacity="0.23" stroke-width="1"/>
<line x1="863.2" y1="121.5" x2="875.3" y2="121.5" stroke="#66b85a" stroke-opacity="0.24" stroke-width="1"/>
<line x1="783.9" y1="173.3" x2="790.7" y2="173.3" stroke="#66b85a" stroke-opacity="0.24" stroke-width="1"/>
<rect x="905.6" y="192.2" width="8.3" height="9.5" rx="0" fill="none" fill-opacity="0" stroke="#3f9a74" stroke-opacity="0.17" stroke-width="1"/>
<line x1="851.9" y1="48.5" x2="884.3" y2="48.5" stroke="#9a8d3e" stroke-opacity="0.34" stroke-width="1"/>
<rect x="972.5" y="290.1" width="5.4" height="13.2" rx="2" fill="none" fill-opacity="0" stroke="#9a8d3e" stroke-opacity="0.21" stroke-width="1"/>
<rect x="774.1" y="277.9" width="11.2" height="13.0" rx="0" fill="none" fill-opacity="0" stroke="#3f9a74" stroke-opacity="0.17" stroke-width="1"/>
<line x1="924.0" y1="184.4" x2="941.7" y2="184.4" stroke="#9a8d3e" stroke-opacity="0.32" stroke-width="1"/>
<line x1="865.5" y1="155.4" x2="924.0" y2="155.4" stroke="#3f9a74" stroke-opacity="0.22" stroke-width="1"/>
<line x1="975.3" y1="57.8" x2="1002.4" y2="57.8" stroke="#66b85a" stroke-opacity="0.28" stroke-width="1"/>
<line x1="880.3" y1="254.7" x2="899.8" y2="254.7" stroke="#66b85a" stroke-opacity="0.28" stroke-width="1"/>
<line x1="862.8" y1="110.2" x2="922.0" y2="110.2" stroke="#3f9a74" stroke-opacity="0.19" stroke-width="1"/>
<rect x="882.8" y="134.0" width="8.6" height="5.6" rx="2" fill="none" fill-opacity="0" stroke="#3f9a74" stroke-opacity="0.32" stroke-width="1"/>
<rect x="873.7" y="27.5" width="5.4" height="6.2" rx="2" fill="none" fill-opacity="0" stroke="#3f9a74" stroke-opacity="0.25" stroke-width="1"/>
<rect x="965.3" y="153.4" width="10.9" height="12.1" rx="0" fill="none" fill-opacity="0" stroke="#66b85a" stroke-opacity="0.3" stroke-width="1"/>
<circle cx="986.3" cy="298.8" r="4.5" fill="none" stroke="#66b85a" stroke-opacity="0.19" stroke-width="1"/>
<rect x="1012.6" y="274.8" width="7.0" height="12.5" rx="2" fill="none" fill-opacity="0" stroke="#9a8d3e" stroke-opacity="0.29" stroke-width="1"/>
<line x1="801.9" y1="269.0" x2="801.9" y2="288.7" stroke="#66b85a" stroke-opacity="0.33" stroke-width="1"/>
<line x1="1014.6" y1="144.0" x2="1040.7" y2="144.0" stroke="#66b85a" stroke-opacity="0.27" stroke-width="1"/>
<rect x="812.5" y="121.0" width="6.5" height="12.1" rx="0" fill="none" fill-opacity="0" stroke="#66b85a" stroke-opacity="0.29" stroke-width="1"/>
<line x1="962.8" y1="14.6" x2="962.8" y2="48.7" stroke="#66b85a" stroke-opacity="0.34" stroke-width="1"/>
<rect x="941.8" y="268.8" width="8.5" height="12.2" rx="2" fill="none" fill-opacity="0" stroke="#66b85a" stroke-opacity="0.35" stroke-width="1"/>
<rect x="859.2" y="110.7" width="9.0" height="6.6" rx="0" fill="none" fill-opacity="0" stroke="#9a8d3e" stroke-opacity="0.22" stroke-width="1"/>
<circle cx="838.2" cy="154.8" r="4.9" fill="none" stroke="#66b85a" stroke-opacity="0.28" stroke-width="1"/>
<line x1="935.2" y1="93.8" x2="956.9" y2="93.8" stroke="#66b85a" stroke-opacity="0.3" stroke-width="1"/>
<line x1="925.2" y1="125.3" x2="943.4" y2="125.3" stroke="#66b85a" stroke-opacity="0.33" stroke-width="1"/>
<line x1="932.4" y1="6.7" x2="966.7" y2="6.7" stroke="#66b85a" stroke-opacity="0.26" stroke-width="1"/>
<line x1="901.0" y1="124.0" x2="940.7" y2="124.0" stroke="#66b85a" stroke-opacity="0.27" stroke-width="1"/>
<line x1="885.4" y1="40.4" x2="885.4" y2="49.9" stroke="#9a8d3e" stroke-opacity="0.29" stroke-width="1"/>
<line x1="798.2" y1="199.6" x2="804.8" y2="199.6" stroke="#66b85a" stroke-opacity="0.23" stroke-width="1"/>
<line x1="930.3" y1="168.7" x2="930.3" y2="207.2" stroke="#66b85a" stroke-opacity="0.27" stroke-width="1"/>
<line x1="915.9" y1="438.0" x2="950.6" y2="438.0" stroke="#9a8d3e" stroke-opacity="0.33" stroke-width="1"/>
<line x1="890.9" y1="366.5" x2="930.0" y2="366.5" stroke="#66b85a" stroke-opacity="0.33" stroke-width="1"/>
<rect x="947.1" y="355.2" width="9.6" height="10.8" rx="0" fill="none" fill-opacity="0" stroke="#3f9a74" stroke-opacity="0.19" stroke-width="1"/>
<rect x="913.9" y="317.9" width="9.3" height="9.8" rx="3" fill="none" fill-opacity="0" stroke="#66b85a" stroke-opacity="0.35" stroke-width="1"/>
<rect x="989.2" y="508.7" width="6.6" height="14.0" rx="2" fill="none" fill-opacity="0" stroke="#3f9a74" stroke-opacity="0.17" stroke-width="1"/>
<circle cx="852.0" cy="310.9" r="6.7" fill="none" stroke="#9a8d3e" stroke-opacity="0.33" stroke-width="1"/>
<rect x="859.0" y="314.7" width="13.7" height="7.7" rx="0" fill="none" fill-opacity="0" stroke="#3f9a74" stroke-opacity="0.29" stroke-width="1"/>
<line x1="819.1" y1="442.1" x2="865.3" y2="442.1" stroke="#9a8d3e" stroke-opacity="0.2" stroke-width="1"/>
<line x1="1011.6" y1="508.9" x2="1011.6" y2="547.4" stroke="#9a8d3e" stroke-opacity="0.19" stroke-width="1"/>
<line x1="885.0" y1="538.5" x2="885.0" y2="544.9" stroke="#3f9a74" stroke-opacity="0.24" stroke-width="1"/>
<line x1="805.9" y1="567.6" x2="823.4" y2="567.6" stroke="#9a8d3e" stroke-opacity="0.26" stroke-width="1"/>
<line x1="939.5" y1="321.8" x2="951.2" y2="321.8" stroke="#9a8d3e" stroke-opacity="0.18" stroke-width="1"/>
<line x1="1008.1" y1="396.6" x2="1021.6" y2="396.6" stroke="#9a8d3e" stroke-opacity="0.29" stroke-width="1"/>
<line x1="944.2" y1="311.9" x2="982.0" y2="311.9" stroke="#66b85a" stroke-opacity="0.3" stroke-width="1"/>
<rect x="881.4" y="528.9" width="11.4" height="8.5" rx="0" fill="none" fill-opacity="0" stroke="#66b85a" stroke-opacity="0.33" stroke-width="1"/>
<rect x="846.1" y="331.4" width="11.8" height="5.8" rx="2" fill="none" fill-opacity="0" stroke="#66b85a" stroke-opacity="0.34" stroke-width="1"/>
<line x1="906.9" y1="337.1" x2="927.0" y2="337.1" stroke="#9a8d3e" stroke-opacity="0.21" stroke-width="1"/>
<line x1="878.6" y1="560.4" x2="878.6" y2="583.8" stroke="#66b85a" stroke-opacity="0.29" stroke-width="1"/>
<line x1="1015.9" y1="441.0" x2="1044.2" y2="441.0" stroke="#9a8d3e" stroke-opacity="0.27" stroke-width="1"/>
<line x1="897.8" y1="516.4" x2="934.3" y2="516.4" stroke="#9a8d3e" stroke-opacity="0.24" stroke-width="1"/>
<line x1="960.0" y1="531.8" x2="976.9" y2="531.8" stroke="#9a8d3e" stroke-opacity="0.18" stroke-width="1"/>
<line x1="970.7" y1="573.8" x2="1014.3" y2="573.8" stroke="#66b85a" stroke-opacity="0.22" stroke-width="1"/>
<line x1="984.9" y1="570.8" x2="984.9" y2="608.0" stroke="#9a8d3e" stroke-opacity="0.34" stroke-width="1"/>
<line x1="835.6" y1="528.3" x2="876.0" y2="528.3" stroke="#9a8d3e" stroke-opacity="0.25" stroke-width="1"/>
<line x1="818.1" y1="520.6" x2="818.1" y2="548.3" stroke="#66b85a" stroke-opacity="0.28" stroke-width="1"/>
<rect x="888.4" y="549.3" width="8.3" height="7.7" rx="3" fill="none" fill-opacity="0" stroke="#66b85a" stroke-opacity="0.23" stroke-width="1"/>
<rect x="1001.9" y="440.3" width="13.5" height="6.1" rx="0" fill="none" fill-opacity="0" stroke="#3f9a74" stroke-opacity="0.35" stroke-width="1"/>
<line x1="878.1" y1="391.5" x2="878.1" y2="427.4" stroke="#9a8d3e" stroke-opacity="0.32" stroke-width="1"/>
<line x1="872.4" y1="429.7" x2="903.4" y2="429.7" stroke="#9a8d3e" stroke-opacity="0.27" stroke-width="1"/>
<rect x="998.3" y="366.6" width="12.4" height="10.6" rx="0" fill="none" fill-opacity="0" stroke="#9a8d3e" stroke-opacity="0.2" stroke-width="1"/>
<line x1="1018.3" y1="502.5" x2="1034.6" y2="502.5" stroke="#9a8d3e" stroke-opacity="0.18" stroke-width="1"/>
<rect x="1018.4" y="504.0" width="6.8" height="6.4" rx="0" fill="none" fill-opacity="0" stroke="#66b85a" stroke-opacity="0.18" stroke-width="1"/>
<line x1="978.1" y1="505.3" x2="1033.3" y2="505.3" stroke="#3f9a74" stroke-opacity="0.2" stroke-width="1"/>
<line x1="862.9" y1="547.9" x2="862.9" y2="596.6" stroke="#3f9a74" stroke-opacity="0.16" stroke-width="1"/>
<line x1="955.3" y1="440.1" x2="993.9" y2="440.1" stroke="#9a8d3e" stroke-opacity="0.24" stroke-width="1"/>
<line x1="890.7" y1="507.5" x2="890.7" y2="548.4" stroke="#3f9a74" stroke-opacity="0.29" stroke-width="1"/>
<rect x="989.5" y="487.0" width="9.1" height="7.8" rx="0" fill="none" fill-opacity="0" stroke="#9a8d3e" stroke-opacity="0.29" stroke-width="1"/>
<rect x="1000.4" y="367.9" width="7.3" height="8.8" rx="3" fill="none" fill-opacity="0" stroke="#3f9a74" stroke-opacity="0.29" stroke-width="1"/>
<line x1="804.4" y1="540.4" x2="811.0" y2="540.4" stroke="#9a8d3e" stroke-opacity="0.33" stroke-width="1"/>
<line x1="986.3" y1="554.3" x2="986.3" y2="569.0" stroke="#66b85a" stroke-opacity="0.16" stroke-width="1"/>
<line x1="975.1" y1="563.4" x2="975.1" y2="598.6" stroke="#9a8d3e" stroke-opacity="0.17" stroke-width="1"/>
<line x1="960.7" y1="443.4" x2="960.7" y2="500.6" stroke="#9a8d3e" stroke-opacity="0.25" stroke-width="1"/>
<circle cx="847.1" cy="491.6" r="5.6" fill="none" stroke="#3f9a74" stroke-opacity="0.25" stroke-width="1"/>
<line x1="937.5" y1="478.5" x2="937.5" y2="485.2" stroke="#9a8d3e" stroke-opacity="0.2" stroke-width="1"/>
<line x1="893.8" y1="417.8" x2="916.2" y2="417.8" stroke="#9a8d3e" stroke-opacity="0.27" stroke-width="1"/>
<circle cx="889.7" cy="567.0" r="4.3" fill="none" stroke="#9a8d3e" stroke-opacity="0.35" stroke-width="1"/>
<rect x="836.9" y="560.2" width="9.2" height="10.1" rx="0" fill="none" fill-opacity="0" stroke="#66b85a" stroke-opacity="0.31" stroke-width="1"/>
<line x1="982.5" y1="341.0" x2="1018.1" y2="341.0" stroke="#3f9a74" stroke-opacity="0.24" stroke-width="1"/>
<line x1="828.0" y1="533.4" x2="872.1" y2="533.4" stroke="#9a8d3e" stroke-opacity="0.31" stroke-width="1"/>
<rect x="954.0" y="575.2" width="12.2" height="8.2" rx="2" fill="none" fill-opacity="0" stroke="#9a8d3e" stroke-opacity="0.25" stroke-width="1"/>
<line x1="871.8" y1="435.8" x2="871.8" y2="491.9" stroke="#66b85a" stroke-opacity="0.28" stroke-width="1"/>
<line x1="991.4" y1="316.0" x2="1042.3" y2="316.0" stroke="#9a8d3e" stroke-opacity="0.31" stroke-width="1"/>
<line x1="941.8" y1="304.2" x2="963.6" y2="304.2" stroke="#66b85a" stroke-opacity="0.19" stroke-width="1"/>
<line x1="936.2" y1="462.0" x2="936.2" y2="510.4" stroke="#9a8d3e" stroke-opacity="0.19" stroke-width="1"/>
<rect x="846.7" y="412.7" width="13.8" height="5.8" rx="2" fill="none" fill-opacity="0" stroke="#9a8d3e" stroke-opacity="0.27" stroke-width="1"/>
<line x1="844.2" y1="494.0" x2="844.2" y2="547.6" stroke="#66b85a" stroke-opacity="0.3" stroke-width="1"/>
<line x1="924.3" y1="374.1" x2="924.3" y2="410.1" stroke="#9a8d3e" stroke-opacity="0.32" stroke-width="1"/>
<line x1="908.5" y1="553.5" x2="946.9" y2="553.5" stroke="#3f9a74" stroke-opacity="0.2" stroke-width="1"/>
<line x1="964.5" y1="344.9" x2="964.5" y2="386.8" stroke="#9a8d3e" stroke-opacity="0.24" stroke-width="1"/>
<rect x="988.3" y="405.0" width="6.6" height="8.2" rx="0" fill="none" fill-opacity="0" stroke="#3f9a74" stroke-opacity="0.35" stroke-width="1"/>
<line x1="804.6" y1="312.8" x2="836.8" y2="312.8" stroke="#9a8d3e" stroke-opacity="0.31" stroke-width="1"/>
<rect x="969.6" y="340.5" width="8.0" height="12.8" rx="2" fill="none" fill-opacity="0" stroke="#9a8d3e" stroke-opacity="0.29" stroke-width="1"/>
<line x1="876.5" y1="518.0" x2="896.0" y2="518.0" stroke="#9a8d3e" stroke-opacity="0.21" stroke-width="1"/>
<line x1="811.8" y1="381.0" x2="811.8" y2="414.2" stroke="#9a8d3e" stroke-opacity="0.32" stroke-width="1"/>
<rect x="860.9" y="441.8" width="8.0" height="7.9" rx="2" fill="none" fill-opacity="0" stroke="#9a8d3e" stroke-opacity="0.28" stroke-width="1"/>
<line x1="828.6" y1="572.4" x2="873.6" y2="572.4" stroke="#66b85a" stroke-opacity="0.31" stroke-width="1"/>
<line x1="998.4" y1="452.7" x2="1006.9" y2="452.7" stroke="#66b85a" stroke-opacity="0.23" stroke-width="1"/>
<rect x="984.1" y="433.0" width="10.5" height="10.6" rx="0" fill="none" fill-opacity="0" stroke="#66b85a" stroke-opacity="0.31" stroke-width="1"/>
<line x1="847.6" y1="486.8" x2="889.4" y2="486.8" stroke="#3f9a74" stroke-opacity="0.28" stroke-width="1"/>
<rect x="994.7" y="418.0" width="8.3" height="12.4" rx="2" fill="none" fill-opacity="0" stroke="#66b85a" stroke-opacity="0.33" stroke-width="1"/>
<line x1="925.9" y1="372.2" x2="933.0" y2="372.2" stroke="#9a8d3e" stroke-opacity="0.19" stroke-width="1"/>
<line x1="926.9" y1="461.9" x2="926.9" y2="512.5" stroke="#66b85a" stroke-opacity="0.25" stroke-width="1"/>
<line x1="973.3" y1="417.9" x2="1000.2" y2="417.9" stroke="#3f9a74" stroke-opacity="0.24" stroke-width="1"/>
<line x1="932.6" y1="562.6" x2="932.6" y2="574.1" stroke="#9a8d3e" stroke-opacity="0.25" stroke-width="1"/>
<line x1="944.4" y1="359.4" x2="944.4" y2="365.9" stroke="#9a8d3e" stroke-opacity="0.28" stroke-width="1"/>
<line x1="949.9" y1="576.3" x2="981.4" y2="576.3" stroke="#66b85a" stroke-opacity="0.19" stroke-width="1"/>
<line x1="861.7" y1="459.3" x2="870.4" y2="459.3" stroke="#3f9a74" stroke-opacity="0.3" stroke-width="1"/>
<line x1="973.4" y1="499.8" x2="1013.3" y2="499.8" stroke="#9a8d3e" stroke-opacity="0.3" stroke-width="1"/>
<line x1="958.9" y1="429.0" x2="966.6" y2="429.0" stroke="#9a8d3e" stroke-opacity="0.33" stroke-width="1"/>
<line x1="813.6" y1="547.3" x2="852.0" y2="547.3" stroke="#66b85a" stroke-opacity="0.23" stroke-width="1"/>
<circle cx="1014.5" cy="533.8" r="5.6" fill="none" stroke="#66b85a" stroke-opacity="0.21" stroke-width="1"/>
<rect x="905.2" y="346.6" width="10.7" height="8.8" rx="3" fill="none" fill-opacity="0" stroke="#66b85a" stroke-opacity="0.22" stroke-width="1"/>
<line x1="974.3" y1="426.8" x2="974.3" y2="448.6" stroke="#9a8d3e" stroke-opacity="0.31" stroke-width="1"/>
<rect x="813.6" y="572.7" width="5.1" height="6.4" rx="2" fill="none" fill-opacity="0" stroke="#9a8d3e" stroke-opacity="0.32" stroke-width="1"/>
<rect x="931.0" y="573.4" width="10.4" height="13.1" rx="3" fill="none" fill-opacity="0" stroke="#9a8d3e" stroke-opacity="0.23" stroke-width="1"/>
<line x1="863.5" y1="300.5" x2="919.2" y2="300.5" stroke="#9a8d3e" stroke-opacity="0.2" stroke-width="1"/>
<rect x="971.0" y="519.3" width="12.8" height="10.1" rx="2" fill="none" fill-opacity="0" stroke="#9a8d3e" stroke-opacity="0.32" stroke-width="1"/>
<line x1="1018.5" y1="523.2" x2="1054.4" y2="523.2" stroke="#3f9a74" stroke-opacity="0.22" stroke-width="1"/>
<line x1="978.6" y1="356.1" x2="1006.0" y2="356.1" stroke="#9a8d3e" stroke-opacity="0.21" stroke-width="1"/>
<line x1="958.7" y1="559.3" x2="958.7" y2="570.0" stroke="#66b85a" stroke-opacity="0.31" stroke-width="1"/>
<line x1="980.7" y1="516.2" x2="980.7" y2="536.2" stroke="#9a8d3e" stroke-opacity="0.23" stroke-width="1"/>
<line x1="986.7" y1="389.9" x2="1002.4" y2="389.9" stroke="#9a8d3e" stroke-opacity="0.19" stroke-width="1"/>
<line x1="957.0" y1="401.6" x2="957.0" y2="415.6" stroke="#9a8d3e" stroke-opacity="0.23" stroke-width="1"/>
<line x1="810.0" y1="579.2" x2="810.0" y2="610.2" stroke="#9a8d3e" stroke-opacity="0.32" stroke-width="1"/>
<line x1="818.3" y1="388.4" x2="818.3" y2="395.5" stroke="#66b85a" stroke-opacity="0.22" stroke-width="1"/>
<line x1="807.5" y1="577.3" x2="863.5" y2="577.3" stroke="#3f9a74" stroke-opacity="0.27" stroke-width="1"/>
<rect x="862.7" y="327.2" width="13.7" height="7.3" rx="0" fill="none" fill-opacity="0" stroke="#3f9a74" stroke-opacity="0.3" stroke-width="1"/>
<line x1="875.9" y1="578.5" x2="912.0" y2="578.5" stroke="#3f9a74" stroke-opacity="0.17" stroke-width="1"/>
<rect x="995.0" y="428.3" width="13.3" height="11.4" rx="0" fill="none" fill-opacity="0" stroke="#66b85a" stroke-opacity="0.32" stroke-width="1"/>
<rect x="857.6" y="458.1" width="8.5" height="9.0" rx="0" fill="none" fill-opacity="0" stroke="#66b85a" stroke-opacity="0.34" stroke-width="1"/>
<circle cx="883.1" cy="365.8" r="6.7" fill="none" stroke="#9a8d3e" stroke-opacity="0.18" stroke-width="1"/>
<line x1="813.3" y1="454.8" x2="861.7" y2="454.8" stroke="#66b85a" stroke-opacity="0.32" stroke-width="1"/>
<line x1="959.0" y1="481.1" x2="1005.7" y2="481.1" stroke="#3f9a74" stroke-opacity="0.16" stroke-width="1"/>
<line x1="1010.4" y1="489.5" x2="1010.4" y2="530.8" stroke="#9a8d3e" stroke-opacity="0.27" stroke-width="1"/>
<line x1="905.4" y1="404.1" x2="905.4" y2="419.2" stroke="#3f9a74" stroke-opacity="0.17" stroke-width="1"/>
<rect x="853.4" y="340.1" width="12.2" height="6.4" rx="0" fill="none" fill-opacity="0" stroke="#66b85a" stroke-opacity="0.24" stroke-width="1"/>
<line x1="817.4" y1="473.2" x2="847.6" y2="473.2" stroke="#9a8d3e" stroke-opacity="0.33" stroke-width="1"/>
<line x1="821.7" y1="560.1" x2="821.7" y2="584.4" stroke="#66b85a" stroke-opacity="0.28" stroke-width="1"/>
<line x1="984.4" y1="433.7" x2="993.4" y2="433.7" stroke="#9a8d3e" stroke-opacity="0.18" stroke-width="1"/>
<line x1="959.9" y1="454.9" x2="988.5" y2="454.9" stroke="#9a8d3e" stroke-opacity="0.24" stroke-width="1"/>
<line x1="855.3" y1="307.1" x2="887.8" y2="307.1" stroke="#9a8d3e" stroke-opacity="0.22" stroke-width="1"/>
<line x1="871.2" y1="552.9" x2="871.2" y2="593.0" stroke="#66b85a" stroke-opacity="0.18" stroke-width="1"/>
<line x1="976.4" y1="559.1" x2="1023.2" y2="559.1" stroke="#3f9a74" stroke-opacity="0.32" stroke-width="1"/>
<circle cx="1017.4" cy="421.0" r="2.5" fill="none" stroke="#9a8d3e" stroke-opacity="0.35" stroke-width="1"/>
<circle cx="864.8" cy="550.9" r="2.7" fill="none" stroke="#66b85a" stroke-opacity="0.32" stroke-width="1"/>
<line x1="943.3" y1="423.8" x2="943.3" y2="472.4" stroke="#9a8d3e" stroke-opacity="0.25" stroke-width="1"/>
<rect x="1011.4" y="380.2" width="7.0" height="10.1" rx="0" fill="none" fill-opacity="0" stroke="#9a8d3e" stroke-opacity="0.24" stroke-width="1"/>
<line x1="988.9" y1="446.1" x2="999.2" y2="446.1" stroke="#9a8d3e" stroke-opacity="0.29" stroke-width="1"/>
<line x1="819.6" y1="470.4" x2="833.0" y2="470.4" stroke="#3f9a74" stroke-opacity="0.3" stroke-width="1"/>
<line x1="950.1" y1="476.0" x2="959.6" y2="476.0" stroke="#9a8d3e" stroke-opacity="0.27" stroke-width="1"/>
<line x1="964.1" y1="414.3" x2="985.3" y2="414.3" stroke="#66b85a" stroke-opacity="0.25" stroke-width="1"/>
<rect x="943.2" y="564.8" width="9.3" height="12.8" rx="2" fill="none" fill-opacity="0" stroke="#66b85a" stroke-opacity="0.15" stroke-width="1"/>
<rect x="855.6" y="457.7" width="10.2" height="12.7" rx="2" fill="none" fill-opacity="0" stroke="#9a8d3e" stroke-opacity="0.16" stroke-width="1"/>
<rect x="916.4" y="424.8" width="12.3" height="12.8" rx="2" fill="none" fill-opacity="0" stroke="#66b85a" stroke-opacity="0.17" stroke-width="1"/>
<line x1="974.5" y1="543.1" x2="1020.0" y2="543.1" stroke="#66b85a" stroke-opacity="0.21" stroke-width="1"/>
<circle cx="900.0" cy="307.2" r="3.1" fill="none" stroke="#9a8d3e" stroke-opacity="0.15" stroke-width="1"/>
<circle cx="840.9" cy="328.7" r="2.1" fill="none" stroke="#9a8d3e" stroke-opacity="0.26" stroke-width="1"/>
<line x1="1007.5" y1="506.8" x2="1007.5" y2="544.0" stroke="#9a8d3e" stroke-opacity="0.15" stroke-width="1"/>
<line x1="917.1" y1="496.7" x2="932.8" y2="496.7" stroke="#66b85a" stroke-opacity="0.22" stroke-width="1"/>
<line x1="861.2" y1="430.2" x2="914.9" y2="430.2" stroke="#9a8d3e" stroke-opacity="0.17" stroke-width="1"/>
<line x1="921.3" y1="363.7" x2="921.3" y2="410.0" stroke="#9a8d3e" stroke-opacity="0.18" stroke-width="1"/>
<line x1="836.8" y1="531.3" x2="836.8" y2="569.8" stroke="#3f9a74" stroke-opacity="0.29" stroke-width="1"/>
<line x1="808.1" y1="571.7" x2="827.1" y2="571.7" stroke="#66b85a" stroke-opacity="0.31" stroke-width="1"/>
<rect x="875.1" y="422.0" width="5.5" height="9.7" rx="2" fill="none" fill-opacity="0" stroke="#9a8d3e" stroke-opacity="0.31" stroke-width="1"/>
<line x1="855.8" y1="418.2" x2="855.8" y2="427.9" stroke="#66b85a" stroke-opacity="0.22" stroke-width="1"/>
<line x1="897.0" y1="441.3" x2="897.0" y2="468.8" stroke="#66b85a" stroke-opacity="0.2" stroke-width="1"/>
<rect x="1023.4" y="427.0" width="13.0" height="5.3" rx="2" fill="none" fill-opacity="0" stroke="#66b85a" stroke-opacity="0.31" stroke-width="1"/>
<line x1="1005.6" y1="474.6" x2="1039.7" y2="474.6" stroke="#66b85a" stroke-opacity="0.27" stroke-width="1"/>
<line x1="897.1" y1="566.2" x2="912.2" y2="566.2" stroke="#9a8d3e" stroke-opacity="0.17" stroke-width="1"/>
<line x1="813.5" y1="568.5" x2="813.5" y2="624.9" stroke="#9a8d3e" stroke-opacity="0.17" stroke-width="1"/>
<line x1="898.6" y1="443.3" x2="898.6" y2="464.1" stroke="#9a8d3e" stroke-opacity="0.33" stroke-width="1"/>
<rect x="964.8" y="507.3" width="10.1" height="10.9" rx="0" fill="none" fill-opacity="0" stroke="#9a8d3e" stroke-opacity="0.32" stroke-width="1"/>
<line x1="922.9" y1="402.7" x2="922.9" y2="425.5" stroke="#9a8d3e" stroke-opacity="0.27" stroke-width="1"/>
<line x1="854.3" y1="362.0" x2="854.3" y2="417.9" stroke="#3f9a74" stroke-opacity="0.34" stroke-width="1"/>
<line x1="836.4" y1="566.6" x2="836.4" y2="588.0" stroke="#9a8d3e" stroke-opacity="0.26" stroke-width="1"/>
<line x1="1021.2" y1="382.7" x2="1074.3" y2="382.7" stroke="#66b85a" stroke-opacity="0.18" stroke-width="1"/>
<line x1="898.6" y1="317.4" x2="898.6" y2="364.6" stroke="#3f9a74" stroke-opacity="0.32" stroke-width="1"/>
<rect x="916.7" y="577.0" width="6.3" height="6.8" rx="2" fill="none" fill-opacity="0" stroke="#9a8d3e" stroke-opacity="0.23" stroke-width="1"/>
<rect x="983.9" y="445.0" width="10.7" height="11.3" rx="3" fill="none" fill-opacity="0" stroke="#3f9a74" stroke-opacity="0.2" stroke-width="1"/>
<circle cx="995.1" cy="301.2" r="4.9" fill="none" stroke="#66b85a" stroke-opacity="0.25" stroke-width="1"/>
<line x1="893.6" y1="519.4" x2="893.6" y2="550.2" stroke="#66b85a" stroke-opacity="0.23" stroke-width="1"/>
<line x1="962.0" y1="382.0" x2="962.0" y2="423.0" stroke="#3f9a74" stroke-opacity="0.26" stroke-width="1"/>
<line x1="801.5" y1="508.8" x2="836.5" y2="508.8" stroke="#3f9a74" stroke-opacity="0.23" stroke-width="1"/>
<line x1="979.9" y1="422.0" x2="1035.6" y2="422.0" stroke="#3f9a74" stroke-opacity="0.27" stroke-width="1"/>
<line x1="872.5" y1="536.1" x2="901.6" y2="536.1" stroke="#9a8d3e" stroke-opacity="0.34" stroke-width="1"/>
<rect x="1004.0" y="303.0" width="7.7" height="9.8" rx="2" fill="none" fill-opacity="0" stroke="#66b85a" stroke-opacity="0.2" stroke-width="1"/>
<line x1="920.6" y1="579.5" x2="920.6" y2="617.6" stroke="#3f9a74" stroke-opacity="0.23" stroke-width="1"/>
<line x1="878.6" y1="565.4" x2="904.9" y2="565.4" stroke="#66b85a" stroke-opacity="0.26" stroke-width="1"/>
<circle cx="889.8" cy="457.2" r="4.4" fill="none" stroke="#9a8d3e" stroke-opacity="0.33" stroke-width="1"/>
<rect x="898.6" y="474.9" width="5.8" height="8.3" rx="2" fill="none" fill-opacity="0" stroke="#9a8d3e" stroke-opacity="0.29" stroke-width="1"/>
<rect x="1019.2" y="531.3" width="11.2" height="12.4" rx="3" fill="none" fill-opacity="0" stroke="#9a8d3e" stroke-opacity="0.17" stroke-width="1"/>
<line x1="941.4" y1="446.7" x2="957.2" y2="446.7" stroke="#9a8d3e" stroke-opacity="0.25" stroke-width="1"/>
<rect x="941.1" y="468.9" width="11.5" height="11.2" rx="0" fill="none" fill-opacity="0" stroke="#9a8d3e" stroke-opacity="0.26" stroke-width="1"/>
<line x1="976.4" y1="385.9" x2="976.4" y2="397.2" stroke="#66b85a" stroke-opacity="0.33" stroke-width="1"/>
<line x1="803.5" y1="308.3" x2="803.5" y2="328.6" stroke="#9a8d3e" stroke-opacity="0.25" stroke-width="1"/>
<line x1="944.9" y1="448.8" x2="944.9" y2="461.4" stroke="#9a8d3e" stroke-opacity="0.26" stroke-width="1"/>
<line x1="835.1" y1="512.7" x2="892.3" y2="512.7" stroke="#66b85a" stroke-opacity="0.16" stroke-width="1"/>
<line x1="909.9" y1="430.9" x2="916.5" y2="430.9" stroke="#3f9a74" stroke-opacity="0.31" stroke-width="1"/>
<line x1="972.6" y1="390.4" x2="993.0" y2="390.4" stroke="#9a8d3e" stroke-opacity="0.22" stroke-width="1"/>
<line x1="822.3" y1="553.1" x2="822.3" y2="579.9" stroke="#66b85a" stroke-opacity="0.22" stroke-width="1"/>
<line x1="656.0" y1="516.5" x2="665.0" y2="516.5" stroke="#66b85a" stroke-opacity="0.14" stroke-width="1"/>
<rect x="676.2" y="129.3" width="7.8" height="13.1" rx="3" fill="none" fill-opacity="0" stroke="#3f9a74" stroke-opacity="0.15" stroke-width="1"/>
<line x1="683.4" y1="349.5" x2="726.0" y2="349.5" stroke="#9a8d3e" stroke-opacity="0.16" stroke-width="1"/>
<rect x="724.2" y="339.2" width="9.4" height="12.1" rx="0" fill="none" fill-opacity="0" stroke="#9a8d3e" stroke-opacity="0.1" stroke-width="1"/>
<circle cx="659.6" cy="98.6" r="3.5" fill="none" stroke="#9a8d3e" stroke-opacity="0.09" stroke-width="1"/>
<line x1="711.8" y1="66.6" x2="752.9" y2="66.6" stroke="#66b85a" stroke-opacity="0.15" stroke-width="1"/>
<line x1="755.7" y1="244.9" x2="755.7" y2="276.1" stroke="#9a8d3e" stroke-opacity="0.12" stroke-width="1"/>
<line x1="687.9" y1="252.6" x2="702.3" y2="252.6" stroke="#9a8d3e" stroke-opacity="0.13" stroke-width="1"/>
<rect x="727.6" y="53.7" width="10.0" height="9.2" rx="0" fill="none" fill-opacity="0" stroke="#9a8d3e" stroke-opacity="0.12" stroke-width="1"/>
<rect x="667.5" y="204.7" width="10.2" height="7.7" rx="3" fill="none" fill-opacity="0" stroke="#66b85a" stroke-opacity="0.11" stroke-width="1"/>
<circle cx="705.5" cy="131.8" r="7.0" fill="none" stroke="#9a8d3e" stroke-opacity="0.13" stroke-width="1"/>
<line x1="715.6" y1="255.4" x2="715.6" y2="289.0" stroke="#9a8d3e" stroke-opacity="0.12" stroke-width="1"/>
<line x1="663.8" y1="435.4" x2="663.8" y2="456.0" stroke="#66b85a" stroke-opacity="0.12" stroke-width="1"/>
<line x1="734.9" y1="223.2" x2="741.7" y2="223.2" stroke="#66b85a" stroke-opacity="0.14" stroke-width="1"/>
<rect x="728.2" y="402.9" width="6.0" height="10.1" rx="2" fill="none" fill-opacity="0" stroke="#3f9a74" stroke-opacity="0.11" stroke-width="1"/>
<line x1="738.6" y1="439.9" x2="756.8" y2="439.9" stroke="#3f9a74" stroke-opacity="0.09" stroke-width="1"/>
<rect x="663.9" y="415.7" width="9.2" height="10.7" rx="0" fill="none" fill-opacity="0" stroke="#9a8d3e" stroke-opacity="0.11" stroke-width="1"/>
<rect x="753.0" y="102.3" width="8.2" height="8.7" rx="3" fill="none" fill-opacity="0" stroke="#9a8d3e" stroke-opacity="0.13" stroke-width="1"/>
<line x1="677.3" y1="491.1" x2="699.1" y2="491.1" stroke="#9a8d3e" stroke-opacity="0.15" stroke-width="1"/>
<line x1="679.8" y1="353.2" x2="688.0" y2="353.2" stroke="#3f9a74" stroke-opacity="0.14" stroke-width="1"/>
<rect x="667.8" y="114.9" width="10.0" height="10.7" rx="0" fill="none" fill-opacity="0" stroke="#9a8d3e" stroke-opacity="0.09" stroke-width="1"/>
<line x1="712.1" y1="132.0" x2="741.6" y2="132.0" stroke="#9a8d3e" stroke-opacity="0.14" stroke-width="1"/>
<rect x="725.3" y="202.4" width="10.9" height="13.1" rx="0" fill="none" fill-opacity="0" stroke="#3f9a74" stroke-opacity="0.09" stroke-width="1"/>
<line x1="757.2" y1="395.0" x2="812.5" y2="395.0" stroke="#3f9a74" stroke-opacity="0.14" stroke-width="1"/>
<circle cx="732.4" cy="50.0" r="5.1" fill="none" stroke="#66b85a" stroke-opacity="0.14" stroke-width="1"/>
<line x1="787.1" y1="659.1" x2="787.1" y2="715.3" stroke="#9a8d3e" stroke-opacity="0.21" stroke-width="1"/>
<line x1="930.3" y1="690.8" x2="930.3" y2="733.3" stroke="#3f9a74" stroke-opacity="0.18" stroke-width="1"/>
<line x1="782.6" y1="681.0" x2="840.0" y2="681.0" stroke="#9a8d3e" stroke-opacity="0.16" stroke-width="1"/>
<circle cx="970.9" cy="663.9" r="5.2" fill="none" stroke="#9a8d3e" stroke-opacity="0.17" stroke-width="1"/>
<line x1="885.4" y1="617.5" x2="896.4" y2="617.5" stroke="#9a8d3e" stroke-opacity="0.12" stroke-width="1"/>
<rect x="913.5" y="600.6" width="7.1" height="7.2" rx="3" fill="none" fill-opacity="0" stroke="#3f9a74" stroke-opacity="0.18" stroke-width="1"/>
<rect x="760.5" y="676.1" width="6.3" height="10.1" rx="2" fill="none" fill-opacity="0" stroke="#3f9a74" stroke-opacity="0.14" stroke-width="1"/>
<line x1="911.3" y1="597.7" x2="953.3" y2="597.7" stroke="#9a8d3e" stroke-opacity="0.19" stroke-width="1"/>
<line x1="902.0" y1="649.2" x2="923.6" y2="649.2" stroke="#9a8d3e" stroke-opacity="0.2" stroke-width="1"/>
<line x1="829.6" y1="611.0" x2="841.6" y2="611.0" stroke="#9a8d3e" stroke-opacity="0.21" stroke-width="1"/>
<line x1="813.9" y1="724.4" x2="813.9" y2="750.0" stroke="#9a8d3e" stroke-opacity="0.14" stroke-width="1"/>
<circle cx="771.1" cy="590.8" r="4.4" fill="none" stroke="#9a8d3e" stroke-opacity="0.16" stroke-width="1"/>
<line x1="947.2" y1="629.8" x2="979.6" y2="629.8" stroke="#3f9a74" stroke-opacity="0.17" stroke-width="1"/>
<line x1="852.0" y1="608.5" x2="852.0" y2="619.4" stroke="#3f9a74" stroke-opacity="0.14" stroke-width="1"/>
<line x1="806.9" y1="672.0" x2="826.2" y2="672.0" stroke="#3f9a74" stroke-opacity="0.18" stroke-width="1"/>
<line x1="762.2" y1="584.2" x2="778.2" y2="584.2" stroke="#9a8d3e" stroke-opacity="0.2" stroke-width="1"/>
<rect x="914.0" y="706.9" width="12.5" height="11.7" rx="2" fill="none" fill-opacity="0" stroke="#3f9a74" stroke-opacity="0.12" stroke-width="1"/>
<line x1="835.3" y1="677.1" x2="835.3" y2="712.9" stroke="#9a8d3e" stroke-opacity="0.14" stroke-width="1"/>
<line x1="832.3" y1="704.7" x2="881.6" y2="704.7" stroke="#9a8d3e" stroke-opacity="0.11" stroke-width="1"/>
<circle cx="1000.0" cy="730.0" r="4.5" fill="none" stroke="#9a8d3e" stroke-opacity="0.21" stroke-width="1"/>
<rect x="871.9" y="603.6" width="6.3" height="7.0" rx="0" fill="none" fill-opacity="0" stroke="#9a8d3e" stroke-opacity="0.17" stroke-width="1"/>
<rect x="854.7" y="725.5" width="9.3" height="7.0" rx="2" fill="none" fill-opacity="0" stroke="#9a8d3e" stroke-opacity="0.22" stroke-width="1"/>
<line x1="720.9" y1="706.1" x2="762.6" y2="706.1" stroke="#3f9a74" stroke-opacity="0.15" stroke-width="1"/>
<line x1="876.4" y1="643.2" x2="934.1" y2="643.2" stroke="#9a8d3e" stroke-opacity="0.11" stroke-width="1"/>
<line x1="773.6" y1="688.7" x2="773.6" y2="725.1" stroke="#9a8d3e" stroke-opacity="0.14" stroke-width="1"/>
<line x1="825.8" y1="609.3" x2="825.8" y2="638.4" stroke="#9a8d3e" stroke-opacity="0.17" stroke-width="1"/>
<circle cx="882.5" cy="673.9" r="5.1" fill="none" stroke="#9a8d3e" stroke-opacity="0.22" stroke-width="1"/>
<rect x="966.6" y="589.0" width="10.1" height="8.8" rx="2" fill="none" fill-opacity="0" stroke="#3f9a74" stroke-opacity="0.14" stroke-width="1"/>
<line x1="866.1" y1="677.1" x2="866.1" y2="717.3" stroke="#9a8d3e" stroke-opacity="0.2" stroke-width="1"/>
<line x1="977.8" y1="613.4" x2="1019.5" y2="613.4" stroke="#3f9a74" stroke-opacity="0.15" stroke-width="1"/>
<line x1="833.1" y1="667.1" x2="862.9" y2="667.1" stroke="#9a8d3e" stroke-opacity="0.14" stroke-width="1"/>
<line x1="799.4" y1="614.1" x2="851.9" y2="614.1" stroke="#9a8d3e" stroke-opacity="0.17" stroke-width="1"/>
<rect x="797.1" y="594.2" width="7.0" height="9.1" rx="0" fill="none" fill-opacity="0" stroke="#3f9a74" stroke-opacity="0.18" stroke-width="1"/>
<line x1="943.6" y1="716.4" x2="943.6" y2="726.4" stroke="#3f9a74" stroke-opacity="0.11" stroke-width="1"/>
<rect x="853.6" y="709.5" width="13.5" height="10.6" rx="0" fill="none" fill-opacity="0" stroke="#3f9a74" stroke-opacity="0.16" stroke-width="1"/>
<circle cx="859.8" cy="682.9" r="4.8" fill="none" stroke="#3f9a74" stroke-opacity="0.12" stroke-width="1"/>
<line x1="955.6" y1="600.5" x2="981.7" y2="600.5" stroke="#3f9a74" stroke-opacity="0.11" stroke-width="1"/>
<line x1="724.6" y1="669.1" x2="737.9" y2="669.1" stroke="#9a8d3e" stroke-opacity="0.16" stroke-width="1"/>
<rect x="996.2" y="593.2" width="12.8" height="6.5" rx="2" fill="none" fill-opacity="0" stroke="#9a8d3e" stroke-opacity="0.17" stroke-width="1"/>
<line x1="964.4" y1="690.4" x2="990.6" y2="690.4" stroke="#9a8d3e" stroke-opacity="0.2" stroke-width="1"/>
<rect x="944.1" y="722.2" width="8.2" height="8.2" rx="2" fill="none" fill-opacity="0" stroke="#3f9a74" stroke-opacity="0.16" stroke-width="1"/>
<line x1="964.1" y1="596.9" x2="964.1" y2="640.4" stroke="#3f9a74" stroke-opacity="0.13" stroke-width="1"/>
<line x1="726.5" y1="728.3" x2="738.4" y2="728.3" stroke="#9a8d3e" stroke-opacity="0.11" stroke-width="1"/>
<rect x="963.4" y="607.8" width="11.0" height="12.5" rx="2" fill="none" fill-opacity="0" stroke="#3f9a74" stroke-opacity="0.21" stroke-width="1"/>
<line x1="883.7" y1="683.4" x2="908.2" y2="683.4" stroke="#9a8d3e" stroke-opacity="0.21" stroke-width="1"/>
<line x1="572.1" y1="150.5" x2="587.9" y2="150.5" stroke="#3f9a74" stroke-opacity="0.11" stroke-width="1"/>
<circle cx="625.5" cy="203.9" r="5.5" fill="none" stroke="#3f9a74" stroke-opacity="0.11" stroke-width="1"/>
<line x1="595.9" y1="68.8" x2="595.9" y2="91.6" stroke="#3f9a74" stroke-opacity="0.08" stroke-width="1"/>
<line x1="570.5" y1="187.4" x2="570.5" y2="218.6" stroke="#3f9a74" stroke-opacity="0.07" stroke-width="1"/>
<line x1="606.2" y1="116.4" x2="638.3" y2="116.4" stroke="#3f9a74" stroke-opacity="0.08" stroke-width="1"/>
<rect x="578.1" y="74.6" width="6.3" height="8.5" rx="0" fill="none" fill-opacity="0" stroke="#3f9a74" stroke-opacity="0.1" stroke-width="1"/>
<line x1="660" y1="40" x2="1024" y2="40" stroke="#3f9a74" stroke-opacity="0.1" stroke-width="1"/>
<line x1="680" y1="130" x2="1024" y2="130" stroke="#9a8d3e" stroke-opacity="0.1" stroke-width="1"/>
<line x1="690" y1="205" x2="1024" y2="205" stroke="#3f9a74" stroke-opacity="0.1" stroke-width="1"/>
<line x1="700" y1="300" x2="1024" y2="300" stroke="#9a8d3e" stroke-opacity="0.1" stroke-width="1"/>
<line x1="720" y1="392" x2="1024" y2="392" stroke="#3f9a74" stroke-opacity="0.11" stroke-width="1"/>
<line x1="740" y1="440" x2="1024" y2="440" stroke="#9a8d3e" stroke-opacity="0.1" stroke-width="1"/>
<line x1="740" y1="530" x2="1024" y2="530" stroke="#3f9a74" stroke-opacity="0.1" stroke-width="1"/>
<line x1="740" y1="560" x2="1024" y2="560" stroke="#9a8d3e" stroke-opacity="0.11" stroke-width="1"/>
<line x1="660" y1="0" x2="660" y2="300" stroke="#3f9a74" stroke-opacity="0.07" stroke-width="1"/>
<line x1="740" y1="0" x2="740" y2="732" stroke="#9a8d3e" stroke-opacity="0.1" stroke-width="1"/>
<line x1="780" y1="0" x2="780" y2="580" stroke="#3f9a74" stroke-opacity="0.12" stroke-width="1"/>
<line x1="830" y1="0" x2="830" y2="732" stroke="#9a8d3e" stroke-opacity="0.12" stroke-width="1"/>
<line x1="870" y1="0" x2="870" y2="580" stroke="#66b85a" stroke-opacity="0.14" stroke-width="1"/>
<line x1="925" y1="0" x2="925" y2="732" stroke="#3f9a74" stroke-opacity="0.12" stroke-width="1"/>
<line x1="950" y1="0" x2="950" y2="580" stroke="#9a8d3e" stroke-opacity="0.14" stroke-width="1"/>
<line x1="995" y1="0" x2="995" y2="732" stroke="#3f9a74" stroke-opacity="0.12" stroke-width="1"/>
<path d="M813.0 276.0 L813.0 276.0 M816.0 276.0 L813.0 279.0 M819.0 276.0 L813.0 282.0 M822.0 276.0 L813.0 285.0 M825.0 276.0 L813.0 288.0 M828.0 276.0 L813.0 291.0 M831.0 276.0 L813.0 294.0 M834.0 276.0 L813.0 297.0 M837.0 276.0 L813.0 300.0 M840.0 276.0 L816.0 300.0 M843.0 276.0 L819.0 300.0 M846.0 276.0 L822.0 300.0 M849.0 276.0 L825.0 300.0 M852.0 276.0 L828.0 300.0 M855.0 276.0 L831.0 300.0 M857.0 277.0 L834.0 300.0 M857.0 280.0 L837.0 300.0 M857.0 283.0 L840.0 300.0 M857.0 286.0 L843.0 300.0 M857.0 289.0 L846.0 300.0 M857.0 292.0 L849.0 300.0 M857.0 295.0 L852.0 300.0 M857.0 298.0 L855.0 300.0" fill="none" fill-opacity="0" stroke="#66b85a" stroke-opacity="0.22" stroke-width="1"/>
<path d="M724.0 192.0 L724.0 192.0 M727.0 192.0 L724.0 195.0 M730.0 192.0 L724.0 198.0 M733.0 192.0 L724.0 201.0 M736.0 192.0 L724.0 204.0 M739.0 192.0 L724.0 207.0 M742.0 192.0 L727.0 207.0 M745.0 192.0 L730.0 207.0 M748.0 192.0 L733.0 207.0 M751.0 192.0 L736.0 207.0 M754.0 192.0 L739.0 207.0 M757.0 192.0 L742.0 207.0 M760.0 192.0 L745.0 207.0 M763.0 192.0 L748.0 207.0 M766.0 192.0 L751.0 207.0 M768.0 193.0 L754.0 207.0 M768.0 196.0 L757.0 207.0 M768.0 199.0 L760.0 207.0 M768.0 202.0 L763.0 207.0 M768.0 205.0 L766.0 207.0" fill="none" fill-opacity="0" stroke="#66b85a" stroke-opacity="0.15" stroke-width="1"/>
<path d="M820.0 0.0 L820.0 0.0 M823.0 0.0 L820.0 3.0 M826.0 0.0 L820.0 6.0 M829.0 0.0 L820.0 9.0 M832.0 0.0 L822.0 10.0 M835.0 0.0 L825.0 10.0 M838.0 0.0 L828.0 10.0 M841.0 0.0 L831.0 10.0 M844.0 0.0 L834.0 10.0 M845.0 2.0 L837.0 10.0 M845.0 5.0 L840.0 10.0 M845.0 8.0 L843.0 10.0" fill="none" fill-opacity="0" stroke="#9a8d3e" stroke-opacity="0.2" stroke-width="1"/>
</g>
</svg>

<!-- desktop icons -->
<svg class="abs" style="left:0;top:0" width="260" height="100" viewBox="0 0 260 100">
  <defs>
    <linearGradient id="fg" x1="0" y1="0" x2="0" y2="1"><stop offset="0" stop-color="#72c3ef"/><stop offset="1" stop-color="#3daee9"/></linearGradient>
  </defs>
  <g id="fold">
    <path d="M36 14 H60 L63.5 18 H92 V30 H36 Z" fill="#1b80bd"/>
    <path d="M35 28 H53.5 L57.5 24 H93 V66 H35 Z" fill="url(#fg)"/>
    <path d="M35 28 H53.5 L57.5 24 H93 V25 H58 L54 29 H35Z" fill="#8ad0f3" opacity=".5"/>
  </g>
  <g fill="none" stroke="#1c76ad" stroke-width="1.2">
    <path d="M54.5 45.5 L64 36 L73.5 45.5 M56.5 43.5 V54 H71.5 V43.5 M69.5 41.5 V37"/>
  </g>
  <rect x="62" y="48" width="3.6" height="6" fill="#1c76ad"/>
  <g transform="translate(128 0)">
    <path d="M36 14 H60 L63.5 18 H92 V30 H36 Z" fill="#1b80bd"/>
    <path d="M35 28 H53.5 L57.5 24 H93 V66 H35 Z" fill="url(#fg)"/>
    <path d="M35 28 H53.5 L57.5 24 H93 V25 H58 L54 29 H35Z" fill="#8ad0f3" opacity=".5"/>
  </g>
  <g fill="none" stroke="#1c76ad" stroke-width="1.2">
    <path d="M182 37.5 H201.5 M189 37.5 V35 H195 V37.5 M184.5 37.5 V54 H199.5 V37.5 M189.5 41.5 V50 M194.5 41.5 V50"/>
  </g>
</svg>
<div class="lbl" style="left:24px">Home</div>
<div class="lbl" style="left:151px">Trash</div>

<!-- cursor -->
<svg class="abs" style="left:276px;top:0" width="24" height="30" viewBox="276 0 24 30">
  <path d="M280.8 4.5 L292.6 16.4 L289.4 19.4 L289.4 24 L287.6 24.4 L284.8 21.2 L280.6 21.2 Z" fill="#4f4f4f" stroke="#fff" stroke-width="1.1" stroke-linejoin="round"/>
</svg>

<!-- top-right toolbox -->
<div class="abs" style="left:994px;top:0;width:30px;height:30px;background:rgba(185,195,195,.45)"></div>
<svg class="abs" style="left:994px;top:0" width="30" height="30" viewBox="994 0 30 30">
  <g fill="#4a4d4e"><rect x="1003" y="10" width="12" height="2"/><rect x="1003" y="14" width="12" height="2"/><rect x="1003" y="18" width="12" height="2"/></g>
</svg>

<div id="menu">
  <div class="it" style="top:0">
    <svg width="16" height="16" viewBox="0 0 16 16"><path d="M3.5 2.5 H9.5 L12.5 5.5 V9 M3.5 2.5 V14.5 H8" fill="none" stroke="#232627" stroke-width="1"/><path d="M9 2.5 L12.5 6 H9 Z" fill="#232627"/><path d="M10.5 9.5 V15 M8 12.5 H13" stroke="#232627" stroke-width="1"/></svg>
    <span class="t">Create New</span>
    <svg class="ar" width="8" height="12" viewBox="0 0 8 12"><path d="M1.5 1.5 L6 6 L1.5 10.5" fill="none" stroke="#232627" stroke-width="1.1"/></svg>
  </div>
  <div class="sep" style="top:29px"></div>
  <div class="it" style="top:33px">
    <svg width="16" height="16" viewBox="0 0 16 16"><rect x="0" y="1" width="16" height="14" fill="#fcfcfc"/><rect x="0" y="1" width="16" height="2" fill="#4d5357"/><rect x="0" y="3" width="16" height="1" fill="#8fd0f0"/><rect x="0" y="14" width="16" height="1" fill="#a0a4a8"/><rect x="2" y="5" width="3" height="3" fill="#5d9ee0"/><rect x="7" y="5" width="2.5" height="3" fill="#f67f3e"/><rect x="11" y="4.5" width="3" height="3.5" fill="#3a5368"/><rect x="2" y="9" width="3" height="3" fill="#5d9ee0"/><rect x="7" y="9" width="2.5" height="3" fill="#4fb53b"/></svg>
    <span class="t">Icons</span>
    <svg class="ar" width="8" height="12" viewBox="0 0 8 12"><path d="M1.5 1.5 L6 6 L1.5 10.5" fill="none" stroke="#232627" stroke-width="1.1"/></svg>
  </div>
  <div class="it dis" style="top:59px">
    <svg width="16" height="16" viewBox="0 0 16 16"><path d="M3.5 3.5 H12.5 V14.5 H3.5 Z M5.5 2.5 H10.5 V4" fill="none" stroke="#8a8c8e" stroke-width="1"/><path d="M5 8.5 H10 M5 11.5 H8" stroke="#8a8c8e" stroke-width="1"/></svg>
    <span class="t">Paste</span><span class="s">Ctrl+V</span></div>
  <div class="it" style="top:85px">
    <svg width="16" height="16" viewBox="0 0 16 16"><path d="M3.5 7 A5 5 0 0 1 9.5 3.5 A4.6 4.6 0 0 1 8 12.5" fill="none" stroke="#232627" stroke-width="1"/><path d="M5.5 1.5 L3.5 4.5 L7 6" fill="none" stroke="#232627" stroke-width="1"/></svg>
    <span class="t">Undo: Trash</span><span class="s">Ctrl+Z</span></div>
  <div class="it" style="top:111px">
    <svg width="16" height="16" viewBox="0 0 16 16"><rect x="2.5" y="2.5" width="11" height="11" fill="none" stroke="#232627" stroke-width="1"/><rect x="4" y="10" width="8" height="1" fill="#232627"/></svg>
    <span class="t">Refresh Desktop</span></div>
  <div class="sep" style="top:140px"></div>
  <div class="it" style="top:144px">
    <svg width="16" height="16" viewBox="0 0 16 16"><rect x="2.5" y="2.5" width="11" height="11" fill="none" stroke="#232627" stroke-width="1"/><rect x="2" y="2" width="12" height="2" fill="#232627"/><path d="M6 6 L10.5 8.5 L6 11 Z" fill="#232627"/></svg>
    <span class="t">Run Command...</span><span class="s">Alt+Space</span></div>
  <div class="it" style="top:170px">
    <svg width="16" height="16" viewBox="0 0 16 16"><path d="M7.5 2.5 V13.5 M2 8 H13" stroke="#232627" stroke-width="1"/></svg>
    <span class="t">Add Widgets...</span><span class="s">Alt+D, A</span></div>
  <div class="it" style="top:196px">
    <svg width="16" height="16" viewBox="0 0 16 16"><path d="M7.5 2.5 V13.5 M2 8 H13" stroke="#232627" stroke-width="1"/></svg>
    <span class="t">Add Panel</span>
    <svg class="ar" width="8" height="12" viewBox="0 0 8 12"><path d="M1.5 1.5 L6 6 L1.5 10.5" fill="none" stroke="#232627" stroke-width="1.1"/></svg>
  </div>
  <div class="it" style="top:222px">
    <svg width="16" height="16" viewBox="0 0 16 16"><g fill="none" stroke="#232627" stroke-width="1"><circle cx="3.2" cy="8" r="1.2"/><circle cx="7.5" cy="8" r="1.2"/><circle cx="11.7" cy="8" r="1.2"/></g></svg>
    <span class="t">Activities...</span><span class="s">Alt+D, Alt+A</span></div>
  <div class="it" style="top:248px">
    <svg width="16" height="16" viewBox="0 0 16 16"><path d="M5 8 V5.5 A2.5 2.5 0 0 1 10 5.5 V8" fill="none" stroke="#232627" stroke-width="1.2"/><rect x="3" y="8" width="10" height="6" fill="#232627"/></svg>
    <span class="t">Lock Widgets</span><span class="s">Alt+D, L</span></div>
  <div class="sep" style="top:277px"></div>
  <div class="it" style="top:281px">
    <svg width="16" height="16" viewBox="0 0 16 16"><path d="M5 8 V5.5 A2.5 2.5 0 0 1 10 5.5 V8" fill="none" stroke="#232627" stroke-width="1.2"/><rect x="3" y="8" width="10" height="6" fill="#232627"/></svg>
    <span class="t">Lock Screen</span><span class="s">Ctrl+Alt+L</span></div>
  <div class="it" style="top:307px">
    <svg width="16" height="16" viewBox="0 0 16 16"><path d="M11.5 2.5 L6 8 L11.5 13.5" fill="none" stroke="#232627" stroke-width="1.1"/></svg>
    <span class="t">Leave...</span><span class="s">Ctrl+Alt+Del</span></div>
  <div class="sep" style="top:336px"></div>
  <div class="it" style="top:340px">
    <svg width="16" height="16" viewBox="0 0 16 16" style="left:5px;top:5px"><defs><linearGradient id="dg" x1="0" y1="0" x2="1" y2="1"><stop offset="0" stop-color="#3da3e9"/><stop offset="1" stop-color="#1a6fcf"/></linearGradient></defs><path d="M0 0 H7 L8.5 1.5 H16 V5 H0Z" fill="#2a6ea6"/><rect x="0" y="3.5" width="16" height="1.5" fill="#fcfcfc"/><rect x="0" y="5" width="16" height="11" fill="url(#dg)"/></svg>
    <span class="t">Open with Dolphin</span><span class="s">Alt+D, T</span></div>
  <div class="it" style="top:366px">
    <svg width="16" height="16" viewBox="0 0 16 16"><path d="M2 4.5 H14 M2 11.5 H14" stroke="#232627" stroke-width="1"/><circle cx="9.5" cy="4.5" r="1.7" fill="#232627"/><circle cx="5" cy="11.5" r="1.5" fill="#f2f4f3" stroke="#232627" stroke-width="1"/></svg>
    <span class="t">Configure Desktop</span><span class="s">Alt+D, Alt+S</span></div>
</div>

<div id="panel"></div>
<div class="abs" style="left:0;top:730px;width:1024px;height:2px;background:linear-gradient(rgba(0,0,0,0.15),rgba(0,0,0,0.5))"></div>
<svg class="abs" style="left:0;top:732px" width="1024" height="36" viewBox="0 732 1024 36">
  <!-- openSUSE logo -->
  <circle cx="18" cy="750" r="15" fill="none" stroke="#232627" stroke-width="2"/>
  <path d="M6.2 740.6 L10.4 741.4 L10.9 739.4 C16 739.5 22 741 26.25 743.8 C28.5 746 29.2 748.5 29 750.4 L28.75 754.4 C22 756.5 14 757.5 5.6 758.5 A15 15 0 0 1 6.2 740.6 Z" fill="#232627"/>
  <circle cx="21.6" cy="747.3" r="3" fill="none" stroke="#d7dcdf" stroke-width="1.3"/>
  <circle cx="22" cy="746.9" r="0.9" fill="#d7dcdf"/>
  <path d="M12.8 749.4 Q20.6 755 28.9 754" fill="none" stroke="#d7dcdf" stroke-width="1.4"/>
  <!-- pager -->
  <rect x="38" y="734" width="20" height="15" fill="#7cc1e8"/>
  <rect x="38" y="750" width="20" height="15" fill="#c4cbcb"/>
  <!-- update icon -->
  <path d="M845.22 744.58 A7.6 7.6 0 0 0 833.62 754.31" fill="none" stroke="#232627" stroke-width="1.05"/>
  <path d="M835.49 756.18 A7.6 7.6 0 0 0 842.20 757.18" fill="none" stroke="#232627" stroke-width="1.05"/>
  <path d="M847.08 752.30 A7.6 7.6 0 0 0 846.90 747.10" fill="none" stroke="#232627" stroke-width="1.05"/>
  <path d="M847.3 743.6 L846.9 747.3 L843.7 745.6 Z" fill="#232627"/>
  <path d="M832.0 756.3 L832.5 752.6 L835.6 754.5 Z" fill="#232627"/>
  <path d="M839.85 745.4 L843.5 748.8 H841.5 V753.6 H838.2 V748.8 H836.2 Z" fill="#232627"/>
  <circle cx="845" cy="754.9" r="3" fill="#3daee9"/>
  <!-- network -->
  <path d="M864.2 742.5 H873.6 V754" fill="none" stroke="#232627" stroke-width="1"/>
  <rect x="862.3" y="753" width="11.8" height="2" fill="#232627"/>
  <rect x="864.7" y="755" width="2.8" height="2" fill="#232627"/>
  <path d="M858.6 742.5 H862.3 V747.5 H858.6 Z" fill="none" stroke="#232627" stroke-width="1"/>
  <rect x="860" y="744" width="1" height="1.8" fill="#232627"/>
  <path d="M860.5 748 V755 Q860.5 757.2 862.7 757.2 H869.8" fill="none" stroke="#232627" stroke-width="1"/>
  <rect x="858" y="749" width="1" height="5.6" fill="#232627"/>
  <!-- volume -->
  <rect x="884.1" y="747.1" width="1.8" height="5.8" fill="#232627"/>
  <path d="M887.1 746.7 L893 742 V757.7 L887.1 753.2 Z" fill="#232627"/>
  <rect x="893.9" y="749" width="6.1" height="1.9" fill="#da4453"/>
  <!-- arrow -->
  <path d="M912 753 L917.9 746.9 L924 753 Z" fill="#232627"/>
  <!-- clock -->
  <g fill="none" stroke="#232627" stroke-width="2.1">
    <path d="M940.35 758.9 V742.3 L935.2 746"/>
    <path d="M953.35 758.9 V742.3 L948.2 746"/>
    <ellipse cx="972.3" cy="750.45" rx="5.1" ry="7.45"/>
    <ellipse cx="984.8" cy="750.45" rx="5" ry="7.45"/>
  </g>
  <circle cx="962.5" cy="747.6" r="1.35" fill="#232627"/>
  <circle cx="962.5" cy="757.5" r="1.35" fill="#232627"/>
  <!-- hamburger -->
  <g fill="#6e7274"><rect x="1001" y="745.3" width="12" height="1.5"/><rect x="1001" y="749.2" width="12" height="1.5"/><rect x="1001" y="753.4" width="12" height="1.5"/></g>
</svg>
</body></html>
